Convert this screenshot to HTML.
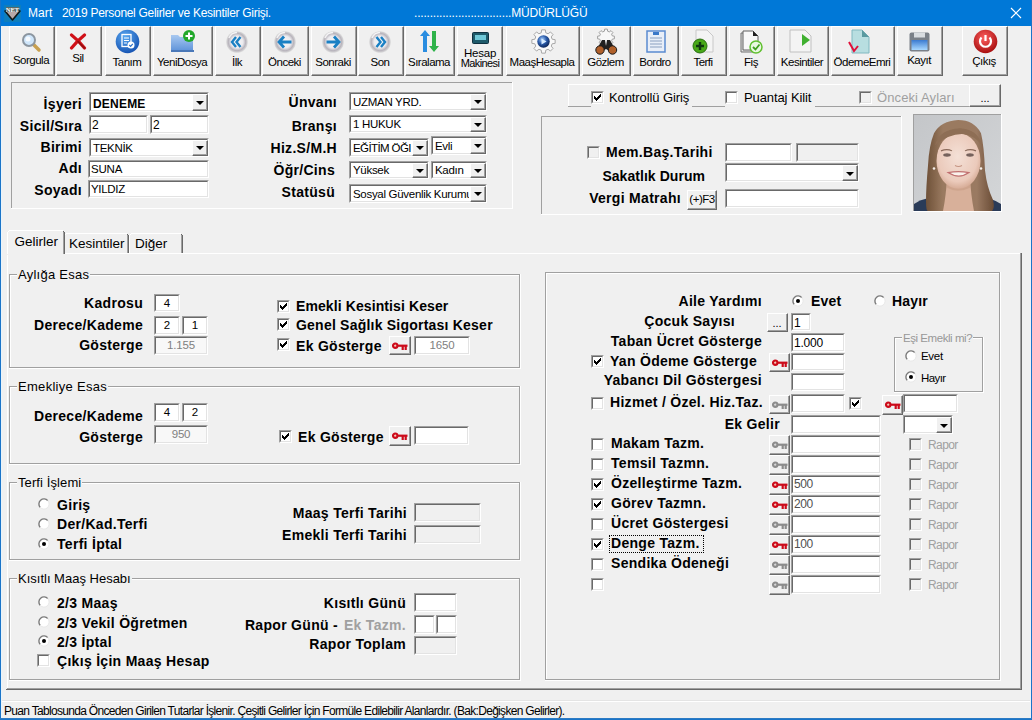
<!DOCTYPE html><html><head><meta charset="utf-8"><style>
html,body{margin:0;padding:0;width:1032px;height:720px;overflow:hidden;background:#f0f0f0;}
body{position:relative;font-family:"Liberation Sans", sans-serif;}
div,svg{position:absolute;box-sizing:border-box;}
</style></head><body>
<div style="left:0px;top:0px;width:1032px;height:720px;background:#f0f0f0"></div>
<div style="left:0px;top:0px;width:1032px;height:26px;background:#0078d7"></div>
<div style="left:0px;top:0px;width:1px;height:720px;background:#1a74c8"></div>
<div style="left:1031px;top:0px;width:1px;height:720px;background:#1a74c8"></div>
<div style="left:1px;top:26px;width:1px;height:692px;background:#e8f4fc"></div>
<div style="left:1030px;top:26px;width:1px;height:692px;background:#eaf2fa"></div>
<div style="left:0px;top:718px;width:1032px;height:1px;background:#2d7bc4"></div>
<div style="left:0px;top:719px;width:1032px;height:1px;background:#1a74c8"></div>
<svg style="left:4px;top:5px" width="17" height="17"><rect x="0" y="0" width="17" height="17" fill="#2a8a8a" opacity="0.35"/><path d="M1 6 L16 6 L8.5 15 Z" fill="#b8a8a8" stroke="#101818" stroke-width="1.6" stroke-linejoin="round"/><rect x="2" y="2" width="13" height="5" fill="#5a6a6a"/><text x="8.5" y="7" font-size="6.5" font-weight="bold" fill="#fff" text-anchor="middle" font-family="Liberation Serif">NET</text></svg>
<div style="left:28px;top:6.84px;font-size:12px;font-weight:normal;color:#fff;letter-spacing:0.1px;line-height:12px;white-space:pre;">Mart</div>
<div style="left:62px;top:6.84px;font-size:12px;font-weight:normal;color:#fff;letter-spacing:-0.3px;line-height:12px;white-space:pre;">2019 Personel Gelirler ve Kesintiler Girişi.</div>
<div style="left:414px;top:6.84px;font-size:12px;font-weight:normal;color:#fff;letter-spacing:-0.2px;line-height:12px;white-space:pre;">...............................MÜDÜRLÜĞÜ</div>
<svg style="left:1010px;top:7px" width="12" height="12"><path d="M1 1 L11 11 M11 1 L1 11" stroke="#fff" stroke-width="1.2"/></svg>
<div style="left:9px;top:26px;width:46px;height:50px;background:#f0f0f0;border-top:1px solid #ffffff;border-left:1px solid #ffffff;border-bottom:1px solid #696969;border-right:1px solid #696969;box-sizing:border-box"><div style="left:0;top:0;right:0;bottom:0;border-bottom:1px solid #a0a0a0;border-right:1px solid #a0a0a0"></div></div>
<svg style="left:20px;top:32px" width="24" height="22"><line x1="13" y1="12" x2="19" y2="18" stroke="#c8a050" stroke-width="3.5" stroke-linecap="round"/><circle cx="9" cy="8" r="6" fill="#cfe6fb" stroke="#8c96a0" stroke-width="2"/><circle cx="8" cy="7" r="2.5" fill="#ffffff" opacity="0.8"/></svg>
<div style="left:-169.0px;top:55.27px;width:400px;text-align:center;font-size:11.5px;font-weight:normal;color:#000;letter-spacing:-0.5px;line-height:11.5px;white-space:pre;">Sorgula</div>
<div style="left:56px;top:26px;width:46px;height:50px;background:#f0f0f0;border-top:1px solid #ffffff;border-left:1px solid #ffffff;border-bottom:1px solid #696969;border-right:1px solid #696969;box-sizing:border-box"><div style="left:0;top:0;right:0;bottom:0;border-bottom:1px solid #a0a0a0;border-right:1px solid #a0a0a0"></div></div>
<svg style="left:69px;top:33px" width="18" height="17"><path d="M2.5 2 Q9 7 15.5 15 M15.5 2 Q8 8 2.5 15" stroke="#d01018" stroke-width="3.2" stroke-linecap="round" fill="none"/><path d="M9 8.5 L15.5 15" stroke="#901010" stroke-width="1.5" stroke-linecap="round"/></svg>
<div style="left:-122.0px;top:53.27px;width:400px;text-align:center;font-size:11.5px;font-weight:normal;color:#000;letter-spacing:-0.5px;line-height:11.5px;white-space:pre;">Sil</div>
<div style="left:105px;top:26px;width:46px;height:50px;background:#f0f0f0;border-top:1px solid #ffffff;border-left:1px solid #ffffff;border-bottom:1px solid #696969;border-right:1px solid #696969;box-sizing:border-box"><div style="left:0;top:0;right:0;bottom:0;border-bottom:1px solid #a0a0a0;border-right:1px solid #a0a0a0"></div></div>
<svg style="left:115px;top:29px" width="25" height="25"><defs><radialGradient id="tg" cx="40%" cy="30%" r="75%"><stop offset="0" stop-color="#5aa8f0"/><stop offset="1" stop-color="#1450b0"/></radialGradient></defs><circle cx="12.5" cy="12.5" r="11.8" fill="url(#tg)"/><rect x="7" y="5.5" width="9" height="12" fill="none" stroke="#fff" stroke-width="1.3"/><path d="M9 9 H14 M9 11.5 H14 M9 14 H12" stroke="#fff" stroke-width="1"/><circle cx="16" cy="16" r="3.5" fill="#fff"/><path d="M14.3 16 L15.6 17.3 L17.8 14.8" stroke="#2a70c8" stroke-width="1.2" fill="none"/></svg>
<div style="left:-73.0px;top:57.27px;width:400px;text-align:center;font-size:11.5px;font-weight:normal;color:#000;letter-spacing:-0.5px;line-height:11.5px;white-space:pre;">Tanım</div>
<div style="left:153px;top:26px;width:60px;height:50px;background:#f0f0f0;border-top:1px solid #ffffff;border-left:1px solid #ffffff;border-bottom:1px solid #696969;border-right:1px solid #696969;box-sizing:border-box"><div style="left:0;top:0;right:0;bottom:0;border-bottom:1px solid #a0a0a0;border-right:1px solid #a0a0a0"></div></div>
<svg style="left:170px;top:29px" width="28" height="25"><defs><linearGradient id="fg" x1="0" y1="0" x2="0" y2="1"><stop offset="0" stop-color="#a8c8f0"/><stop offset="1" stop-color="#5a90d8"/></linearGradient></defs><path d="M1 6 H8 L10 8 H23 V23 H1 Z" fill="url(#fg)"/><rect x="1" y="21" width="23" height="2" fill="#4a78b8"/><circle cx="19" cy="7" r="6" fill="#22a82a"/><path d="M19 3.5 V10.5 M15.5 7 H22.5" stroke="#fff" stroke-width="2"/></svg>
<div style="left:-18.0px;top:57.27px;width:400px;text-align:center;font-size:11.5px;font-weight:normal;color:#000;letter-spacing:-0.5px;line-height:11.5px;white-space:pre;">YeniDosya</div>
<div style="left:215px;top:26px;width:46px;height:50px;background:#f0f0f0;border-top:1px solid #ffffff;border-left:1px solid #ffffff;border-bottom:1px solid #696969;border-right:1px solid #696969;box-sizing:border-box"><div style="left:0;top:0;right:0;bottom:0;border-bottom:1px solid #a0a0a0;border-right:1px solid #a0a0a0"></div></div>
<svg style="left:225px;top:30px" width="24" height="24"><defs><radialGradient id="sg" cx="50%" cy="50%" r="50%"><stop offset="0" stop-color="#f8f8f8"/><stop offset="0.55" stop-color="#ecebef"/><stop offset="0.8" stop-color="#b8b4bc"/><stop offset="1" stop-color="#dcdcdc"/></radialGradient></defs><circle cx="12" cy="12" r="10.8" fill="url(#sg)"/><path d="M4 8 A9 9 0 0 1 12 2.5" stroke="#ffffff" stroke-width="1.5" fill="none" opacity="0.8"/><path d="M11 7 L7 12 L11 17 M15.5 7 L11.5 12 L15.5 17" stroke="#1a80c4" stroke-width="2.4" fill="none"/></svg>
<div style="left:37.0px;top:57.27px;width:400px;text-align:center;font-size:11.5px;font-weight:normal;color:#000;letter-spacing:-0.5px;line-height:11.5px;white-space:pre;">İlk</div>
<div style="left:262px;top:26px;width:47px;height:50px;background:#f0f0f0;border-top:1px solid #ffffff;border-left:1px solid #ffffff;border-bottom:1px solid #696969;border-right:1px solid #696969;box-sizing:border-box"><div style="left:0;top:0;right:0;bottom:0;border-bottom:1px solid #a0a0a0;border-right:1px solid #a0a0a0"></div></div>
<svg style="left:273px;top:30px" width="24" height="24"><defs><radialGradient id="sg" cx="50%" cy="50%" r="50%"><stop offset="0" stop-color="#f8f8f8"/><stop offset="0.55" stop-color="#ecebef"/><stop offset="0.8" stop-color="#b8b4bc"/><stop offset="1" stop-color="#dcdcdc"/></radialGradient></defs><circle cx="12" cy="12" r="10.8" fill="url(#sg)"/><path d="M4 8 A9 9 0 0 1 12 2.5" stroke="#ffffff" stroke-width="1.5" fill="none" opacity="0.8"/><path d="M11 6.5 L6 12 L11 17.5 M7 12 H18.5" stroke="#1a80c4" stroke-width="2.8" fill="none"/></svg>
<div style="left:84.5px;top:57.27px;width:400px;text-align:center;font-size:11.5px;font-weight:normal;color:#000;letter-spacing:-0.5px;line-height:11.5px;white-space:pre;">Önceki</div>
<div style="left:311px;top:26px;width:46px;height:50px;background:#f0f0f0;border-top:1px solid #ffffff;border-left:1px solid #ffffff;border-bottom:1px solid #696969;border-right:1px solid #696969;box-sizing:border-box"><div style="left:0;top:0;right:0;bottom:0;border-bottom:1px solid #a0a0a0;border-right:1px solid #a0a0a0"></div></div>
<svg style="left:321px;top:30px" width="24" height="24"><defs><radialGradient id="sg" cx="50%" cy="50%" r="50%"><stop offset="0" stop-color="#f8f8f8"/><stop offset="0.55" stop-color="#ecebef"/><stop offset="0.8" stop-color="#b8b4bc"/><stop offset="1" stop-color="#dcdcdc"/></radialGradient></defs><circle cx="12" cy="12" r="10.8" fill="url(#sg)"/><path d="M4 8 A9 9 0 0 1 12 2.5" stroke="#ffffff" stroke-width="1.5" fill="none" opacity="0.8"/><path d="M13 6.5 L18 12 L13 17.5 M5.5 12 H17" stroke="#1a80c4" stroke-width="2.8" fill="none"/></svg>
<div style="left:133.0px;top:57.27px;width:400px;text-align:center;font-size:11.5px;font-weight:normal;color:#000;letter-spacing:-0.5px;line-height:11.5px;white-space:pre;">Sonraki</div>
<div style="left:358px;top:26px;width:46px;height:50px;background:#f0f0f0;border-top:1px solid #ffffff;border-left:1px solid #ffffff;border-bottom:1px solid #696969;border-right:1px solid #696969;box-sizing:border-box"><div style="left:0;top:0;right:0;bottom:0;border-bottom:1px solid #a0a0a0;border-right:1px solid #a0a0a0"></div></div>
<svg style="left:368px;top:30px" width="24" height="24"><defs><radialGradient id="sg" cx="50%" cy="50%" r="50%"><stop offset="0" stop-color="#f8f8f8"/><stop offset="0.55" stop-color="#ecebef"/><stop offset="0.8" stop-color="#b8b4bc"/><stop offset="1" stop-color="#dcdcdc"/></radialGradient></defs><circle cx="12" cy="12" r="10.8" fill="url(#sg)"/><path d="M4 8 A9 9 0 0 1 12 2.5" stroke="#ffffff" stroke-width="1.5" fill="none" opacity="0.8"/><path d="M8.5 7 L12.5 12 L8.5 17 M13 7 L17 12 L13 17" stroke="#1a80c4" stroke-width="2.4" fill="none"/></svg>
<div style="left:180.0px;top:57.27px;width:400px;text-align:center;font-size:11.5px;font-weight:normal;color:#000;letter-spacing:-0.5px;line-height:11.5px;white-space:pre;">Son</div>
<div style="left:405px;top:26px;width:50px;height:50px;background:#f0f0f0;border-top:1px solid #ffffff;border-left:1px solid #ffffff;border-bottom:1px solid #696969;border-right:1px solid #696969;box-sizing:border-box"><div style="left:0;top:0;right:0;bottom:0;border-bottom:1px solid #a0a0a0;border-right:1px solid #a0a0a0"></div></div>
<svg style="left:420px;top:29px" width="20" height="24"><path d="M5 1 L10 7 H7 V23 H3 V7 H0 Z" fill="#2a8de0"/><path d="M14 23 L19 17 H16 V2 H12 V17 H9 Z" fill="#2fb34a"/></svg>
<div style="left:229.0px;top:57.27px;width:400px;text-align:center;font-size:11.5px;font-weight:normal;color:#000;letter-spacing:-0.5px;line-height:11.5px;white-space:pre;">Sıralama</div>
<div style="left:457px;top:26px;width:46px;height:50px;background:#f0f0f0;border-top:1px solid #ffffff;border-left:1px solid #ffffff;border-bottom:1px solid #696969;border-right:1px solid #696969;box-sizing:border-box"><div style="left:0;top:0;right:0;bottom:0;border-bottom:1px solid #a0a0a0;border-right:1px solid #a0a0a0"></div></div>
<svg style="left:472px;top:32px" width="17" height="12"><rect x="0.5" y="0.5" width="16" height="11" rx="1" fill="#1e5a6a" stroke="#0e3040"/><rect x="3" y="3" width="11" height="5" fill="#6fc8d8"/></svg>
<div style="left:280.0px;top:48.27px;width:400px;text-align:center;font-size:11.5px;font-weight:normal;color:#000;letter-spacing:-0.2px;line-height:11.5px;white-space:pre;">Hesap</div>
<div style="left:280.0px;top:57.69px;width:400px;text-align:center;font-size:11px;font-weight:normal;color:#000;letter-spacing:-0.6px;line-height:11px;white-space:pre;">Makinesi</div>
<div style="left:506px;top:26px;width:74px;height:50px;background:#f0f0f0;border-top:1px solid #ffffff;border-left:1px solid #ffffff;border-bottom:1px solid #696969;border-right:1px solid #696969;box-sizing:border-box"><div style="left:0;top:0;right:0;bottom:0;border-bottom:1px solid #a0a0a0;border-right:1px solid #a0a0a0"></div></div>
<svg style="left:531px;top:29px" width="25" height="25"><defs><radialGradient id="mg" cx="40%" cy="35%" r="70%"><stop offset="0" stop-color="#a8d0ff"/><stop offset="0.5" stop-color="#2a5aa8"/><stop offset="1" stop-color="#0a2050"/></radialGradient></defs><path d="M21.22 10.26 L24.15 10.65 L24.15 14.35 L21.22 14.74 L20.25 17.08 L22.05 19.44 L19.44 22.05 L17.08 20.25 L14.74 21.22 L14.35 24.15 L10.65 24.15 L10.26 21.22 L7.92 20.25 L5.56 22.05 L2.95 19.44 L4.75 17.08 L3.78 14.74 L0.85 14.35 L0.85 10.65 L3.78 10.26 L4.75 7.92 L2.95 5.56 L5.56 2.95 L7.92 4.75 L10.26 3.78 L10.65 0.85 L14.35 0.85 L14.74 3.78 L17.08 4.75 L19.44 2.95 L22.05 5.56 L20.25 7.92 Z" fill="#f8f8f8" stroke="#a8a8a8" stroke-width="1"/><circle cx="12.5" cy="12.5" r="6.2" fill="url(#mg)"/><path d="M10.5 9.5 L15.5 12.5 L10.5 15.5 Z" fill="#d8ecff"/></svg>
<div style="left:342.0px;top:57.27px;width:400px;text-align:center;font-size:11.5px;font-weight:normal;color:#000;letter-spacing:-0.5px;line-height:11.5px;white-space:pre;">MaaşHesapla</div>
<div style="left:582px;top:26px;width:49px;height:50px;background:#f0f0f0;border-top:1px solid #ffffff;border-left:1px solid #ffffff;border-bottom:1px solid #696969;border-right:1px solid #696969;box-sizing:border-box"><div style="left:0;top:0;right:0;bottom:0;border-bottom:1px solid #a0a0a0;border-right:1px solid #a0a0a0"></div></div>
<svg style="left:593px;top:28px" width="27" height="27"><path d="M19.30 7.88 L21.40 8.17 L21.40 10.83 L19.30 11.12 L18.59 12.81 L19.88 14.50 L18.00 16.38 L16.31 15.09 L14.62 15.80 L14.33 17.90 L11.67 17.90 L11.38 15.80 L9.69 15.09 L8.00 16.38 L6.12 14.50 L7.41 12.81 L6.70 11.12 L4.60 10.83 L4.60 8.17 L6.70 7.88 L7.41 6.19 L6.12 4.50 L8.00 2.62 L9.69 3.91 L11.38 3.20 L11.67 1.10 L14.33 1.10 L14.62 3.20 L16.31 3.91 L18.00 2.62 L19.88 4.50 L18.59 6.19 Z" fill="#f8f8f8" stroke="#a0a0a0" stroke-width="1"/><path d="M9 12 L12 12 L13 18 L14 12 L17 12 L22 21 L18 24 L13 21 L8 24 L4 21 Z" fill="#202020"/><circle cx="7" cy="22" r="4.2" fill="#b0602a" stroke="#1a1a1a" stroke-width="1"/><circle cx="19.5" cy="22" r="4.2" fill="#b0602a" stroke="#1a1a1a" stroke-width="1"/></svg>
<div style="left:405.5px;top:57.27px;width:400px;text-align:center;font-size:11.5px;font-weight:normal;color:#000;letter-spacing:-0.5px;line-height:11.5px;white-space:pre;">Gözlem</div>
<div style="left:633px;top:26px;width:46px;height:50px;background:#f0f0f0;border-top:1px solid #ffffff;border-left:1px solid #ffffff;border-bottom:1px solid #696969;border-right:1px solid #696969;box-sizing:border-box"><div style="left:0;top:0;right:0;bottom:0;border-bottom:1px solid #a0a0a0;border-right:1px solid #a0a0a0"></div></div>
<svg style="left:644px;top:29px" width="24" height="24"><rect x="3" y="2" width="18" height="21" fill="#e8eef8" stroke="#5a8ad0" stroke-width="1.5"/><rect x="9" y="3" width="6" height="3" fill="#3a78c8"/><path d="M6 9 H18 M6 12 H18 M6 15 H18 M6 18 H18" stroke="#8aa0c0" stroke-width="1.2"/></svg>
<div style="left:455.0px;top:57.27px;width:400px;text-align:center;font-size:11.5px;font-weight:normal;color:#000;letter-spacing:-0.5px;line-height:11.5px;white-space:pre;">Bordro</div>
<div style="left:681px;top:26px;width:46px;height:50px;background:#f0f0f0;border-top:1px solid #ffffff;border-left:1px solid #ffffff;border-bottom:1px solid #696969;border-right:1px solid #696969;box-sizing:border-box"><div style="left:0;top:0;right:0;bottom:0;border-bottom:1px solid #a0a0a0;border-right:1px solid #a0a0a0"></div></div>
<svg style="left:692px;top:29px" width="24" height="25"><path d="M4 1 H15 L21 7 V23 H4 Z" fill="#f4f4f4" stroke="#c8c8c8"/><circle cx="8" cy="17" r="7" fill="#48a818" stroke="#2a7010"/><path d="M8 13 V21 M4 17 H12" stroke="#103810" stroke-width="2.4"/></svg>
<div style="left:503.0px;top:57.27px;width:400px;text-align:center;font-size:11.5px;font-weight:normal;color:#000;letter-spacing:-0.5px;line-height:11.5px;white-space:pre;">Terfi</div>
<div style="left:729px;top:26px;width:46px;height:50px;background:#f0f0f0;border-top:1px solid #ffffff;border-left:1px solid #ffffff;border-bottom:1px solid #696969;border-right:1px solid #696969;box-sizing:border-box"><div style="left:0;top:0;right:0;bottom:0;border-bottom:1px solid #a0a0a0;border-right:1px solid #a0a0a0"></div></div>
<svg style="left:739px;top:29px" width="25" height="25"><path d="M2 4 H12 L17 9 V23 H2 Z" fill="#e0e0e0" stroke="#707070"/><path d="M4 2 H14 L19 7 V21 H4 Z" fill="#f8f8f8" stroke="#606060"/><path d="M14 2 L19 7 H14 Z" fill="#202020"/><circle cx="17" cy="18" r="6" fill="#e8f8e0" stroke="#60c030" stroke-width="1.5"/><path d="M14 18 L16.5 20.5 L20.5 15.5" stroke="#40a020" stroke-width="1.8" fill="none"/></svg>
<div style="left:551.0px;top:57.27px;width:400px;text-align:center;font-size:11.5px;font-weight:normal;color:#000;letter-spacing:-0.5px;line-height:11.5px;white-space:pre;">Fiş</div>
<div style="left:777px;top:26px;width:52px;height:50px;background:#f0f0f0;border-top:1px solid #ffffff;border-left:1px solid #ffffff;border-bottom:1px solid #696969;border-right:1px solid #696969;box-sizing:border-box"><div style="left:0;top:0;right:0;bottom:0;border-bottom:1px solid #a0a0a0;border-right:1px solid #a0a0a0"></div></div>
<svg style="left:789px;top:29px" width="24" height="25"><path d="M1 1 H16 L22 7 V23 H1 Z" fill="#f4f4f4" stroke="#c0c0c0"/><path d="M13 5 L21 11 L13 17 Z" fill="#40b030"/></svg>
<div style="left:602.0px;top:57.27px;width:400px;text-align:center;font-size:11.5px;font-weight:normal;color:#000;letter-spacing:-0.5px;line-height:11.5px;white-space:pre;">Kesintiler</div>
<div style="left:831px;top:26px;width:64px;height:50px;background:#f0f0f0;border-top:1px solid #ffffff;border-left:1px solid #ffffff;border-bottom:1px solid #696969;border-right:1px solid #696969;box-sizing:border-box"><div style="left:0;top:0;right:0;bottom:0;border-bottom:1px solid #a0a0a0;border-right:1px solid #a0a0a0"></div></div>
<svg style="left:848px;top:29px" width="26" height="26"><path d="M4 1 H14 L21 8 V24 H4 Z" fill="#b8dee0" stroke="#80b8c0"/><path d="M14 1 L21 8 H14 Z" fill="#5a9aa0"/><path d="M1 13 L6 22 L10 17" stroke="#e0103a" stroke-width="2" fill="none"/></svg>
<div style="left:662.0px;top:57.27px;width:400px;text-align:center;font-size:11.5px;font-weight:normal;color:#000;letter-spacing:-0.5px;line-height:11.5px;white-space:pre;">ÖdemeEmri</div>
<div style="left:897px;top:26px;width:46px;height:50px;background:#f0f0f0;border-top:1px solid #ffffff;border-left:1px solid #ffffff;border-bottom:1px solid #696969;border-right:1px solid #696969;box-sizing:border-box"><div style="left:0;top:0;right:0;bottom:0;border-bottom:1px solid #a0a0a0;border-right:1px solid #a0a0a0"></div></div>
<svg style="left:909px;top:32px" width="21" height="20"><rect x="0.5" y="0.5" width="20" height="19" rx="2" fill="#7a8088"/><rect x="5" y="0.5" width="11" height="5" fill="#d8dce0"/><defs><linearGradient id="kg" x1="0" y1="0" x2="0" y2="1"><stop offset="0" stop-color="#3a7ad0"/><stop offset="1" stop-color="#a8d8ff"/></linearGradient></defs><rect x="2.5" y="8" width="16" height="10" fill="url(#kg)"/></svg>
<div style="left:719.0px;top:55.27px;width:400px;text-align:center;font-size:11.5px;font-weight:normal;color:#000;letter-spacing:-0.5px;line-height:11.5px;white-space:pre;">Kayıt</div>
<div style="left:962px;top:26px;width:46px;height:50px;background:#f0f0f0;border-top:1px solid #ffffff;border-left:1px solid #ffffff;border-bottom:1px solid #696969;border-right:1px solid #696969;box-sizing:border-box"><div style="left:0;top:0;right:0;bottom:0;border-bottom:1px solid #a0a0a0;border-right:1px solid #a0a0a0"></div></div>
<svg style="left:973px;top:29px" width="25" height="25"><defs><radialGradient id="cg" cx="45%" cy="35%" r="70%"><stop offset="0" stop-color="#ff6060"/><stop offset="1" stop-color="#a00808"/></radialGradient></defs><circle cx="12.5" cy="12.5" r="11.8" fill="url(#cg)"/><path d="M8.5 8.5 A5.5 5.5 0 1 0 16.5 8.5" stroke="#fff" stroke-width="2.2" fill="none"/><path d="M12.5 6 V12" stroke="#fff" stroke-width="2.2"/></svg>
<div style="left:784.0px;top:56.27px;width:400px;text-align:center;font-size:11.5px;font-weight:normal;color:#000;letter-spacing:-0.5px;line-height:11.5px;white-space:pre;">Çıkış</div>
<div style="left:11px;top:82px;width:502px;height:1px;background:#a0a0a0"></div>
<div style="left:11px;top:82px;width:1px;height:127px;background:#a0a0a0"></div>
<div style="left:11px;top:208px;width:502px;height:1px;background:#ffffff"></div>
<div style="left:512px;top:82px;width:1px;height:127px;background:#ffffff"></div>
<div style="left:-318px;top:97.15px;width:400px;text-align:right;font-size:14px;font-weight:bold;color:#000;letter-spacing:0.3px;line-height:14px;white-space:pre;">İşyeri</div>
<div style="left:-318px;top:119.15px;width:400px;text-align:right;font-size:14px;font-weight:bold;color:#000;letter-spacing:0.3px;line-height:14px;white-space:pre;">Sicil/Sıra</div>
<div style="left:-318px;top:140.15px;width:400px;text-align:right;font-size:14px;font-weight:bold;color:#000;letter-spacing:0.3px;line-height:14px;white-space:pre;">Birimi</div>
<div style="left:-318px;top:161.15px;width:400px;text-align:right;font-size:14px;font-weight:bold;color:#000;letter-spacing:0.3px;line-height:14px;white-space:pre;">Adı</div>
<div style="left:-318px;top:183.15px;width:400px;text-align:right;font-size:14px;font-weight:bold;color:#000;letter-spacing:0.3px;line-height:14px;white-space:pre;">Soyadı</div>
<div style="left:89px;top:92px;width:120px;height:20px;background:#fff;border-top:1px solid #a0a0a0;border-left:1px solid #a0a0a0;border-bottom:1px solid #ffffff;border-right:1px solid #ffffff;box-sizing:border-box"><div style="left:0;top:0;right:0;bottom:0;border-top:1px solid #696969;border-left:1px solid #696969;border-bottom:1px solid #e3e3e3;border-right:1px solid #e3e3e3"></div></div>
<div style="left:91px;top:94px;width:100px;height:16px;overflow:hidden">
<div style="left:2px;top:3.84px;font-size:12px;font-weight:bold;color:#000;letter-spacing:0.2px;line-height:12px;white-space:pre;">DENEME</div>
</div>
<div style="left:192px;top:94px;width:16px;height:17px;background:#f0f0f0;border-top:1px solid #ffffff;border-left:1px solid #ffffff;border-bottom:1px solid #696969;border-right:1px solid #696969;box-sizing:border-box"><div style="left:0;top:0;right:0;bottom:0;border-bottom:1px solid #a0a0a0;border-right:1px solid #a0a0a0"></div></div>
<svg style="left:196px;top:101px" width="8" height="5"><path d="M0 0 L8 0 L4 4 Z" fill="#000"/></svg>
<div style="left:89px;top:115px;width:59px;height:19px;background:#fff;border-top:1px solid #a0a0a0;border-left:1px solid #a0a0a0;border-bottom:1px solid #ffffff;border-right:1px solid #ffffff;box-sizing:border-box"><div style="left:0;top:0;right:0;bottom:0;border-top:1px solid #696969;border-left:1px solid #696969;border-bottom:1px solid #e3e3e3;border-right:1px solid #e3e3e3"></div></div>
<div style="left:92px;top:118.84px;font-size:12px;font-weight:normal;color:#000;letter-spacing:0px;line-height:12px;white-space:pre;">2</div>
<div style="left:150px;top:115px;width:59px;height:19px;background:#fff;border-top:1px solid #a0a0a0;border-left:1px solid #a0a0a0;border-bottom:1px solid #ffffff;border-right:1px solid #ffffff;box-sizing:border-box"><div style="left:0;top:0;right:0;bottom:0;border-top:1px solid #696969;border-left:1px solid #696969;border-bottom:1px solid #e3e3e3;border-right:1px solid #e3e3e3"></div></div>
<div style="left:153px;top:118.84px;font-size:12px;font-weight:normal;color:#000;letter-spacing:0px;line-height:12px;white-space:pre;">2</div>
<div style="left:89px;top:138px;width:120px;height:19px;background:#fff;border-top:1px solid #a0a0a0;border-left:1px solid #a0a0a0;border-bottom:1px solid #ffffff;border-right:1px solid #ffffff;box-sizing:border-box"><div style="left:0;top:0;right:0;bottom:0;border-top:1px solid #696969;border-left:1px solid #696969;border-bottom:1px solid #e3e3e3;border-right:1px solid #e3e3e3"></div></div>
<div style="left:91px;top:140px;width:100px;height:15px;overflow:hidden">
<div style="left:2px;top:3.27px;font-size:11.5px;font-weight:normal;color:#000;letter-spacing:-0.3px;line-height:11.5px;white-space:pre;">TEKNİK</div>
</div>
<div style="left:192px;top:140px;width:16px;height:16px;background:#f0f0f0;border-top:1px solid #ffffff;border-left:1px solid #ffffff;border-bottom:1px solid #696969;border-right:1px solid #696969;box-sizing:border-box"><div style="left:0;top:0;right:0;bottom:0;border-bottom:1px solid #a0a0a0;border-right:1px solid #a0a0a0"></div></div>
<svg style="left:196px;top:146px" width="8" height="5"><path d="M0 0 L8 0 L4 4 Z" fill="#000"/></svg>
<div style="left:88px;top:160px;width:121px;height:18px;background:#fff;border-top:1px solid #a0a0a0;border-left:1px solid #a0a0a0;border-bottom:1px solid #ffffff;border-right:1px solid #ffffff;box-sizing:border-box"><div style="left:0;top:0;right:0;bottom:0;border-top:1px solid #696969;border-left:1px solid #696969;border-bottom:1px solid #e3e3e3;border-right:1px solid #e3e3e3"></div></div>
<div style="left:91px;top:164.27px;font-size:11.5px;font-weight:normal;color:#000;letter-spacing:-0.2px;line-height:11.5px;white-space:pre;">SUNA</div>
<div style="left:88px;top:180px;width:121px;height:18px;background:#fff;border-top:1px solid #a0a0a0;border-left:1px solid #a0a0a0;border-bottom:1px solid #ffffff;border-right:1px solid #ffffff;box-sizing:border-box"><div style="left:0;top:0;right:0;bottom:0;border-top:1px solid #696969;border-left:1px solid #696969;border-bottom:1px solid #e3e3e3;border-right:1px solid #e3e3e3"></div></div>
<div style="left:91px;top:184.27px;font-size:11.5px;font-weight:normal;color:#000;letter-spacing:-0.3px;line-height:11.5px;white-space:pre;">YILDIZ</div>
<div style="left:-63px;top:95.15px;width:400px;text-align:right;font-size:14px;font-weight:bold;color:#000;letter-spacing:0.3px;line-height:14px;white-space:pre;">Ünvanı</div>
<div style="left:-63px;top:119.15px;width:400px;text-align:right;font-size:14px;font-weight:bold;color:#000;letter-spacing:0.3px;line-height:14px;white-space:pre;">Branşı</div>
<div style="left:-63px;top:141.15px;width:400px;text-align:right;font-size:14px;font-weight:bold;color:#000;letter-spacing:0.3px;line-height:14px;white-space:pre;">Hiz.S/M.H</div>
<div style="left:-65px;top:163.15px;width:400px;text-align:right;font-size:14px;font-weight:bold;color:#000;letter-spacing:0.3px;line-height:14px;white-space:pre;">Öğr/Cins</div>
<div style="left:-65px;top:185.15px;width:400px;text-align:right;font-size:14px;font-weight:bold;color:#000;letter-spacing:0.3px;line-height:14px;white-space:pre;">Statüsü</div>
<div style="left:349px;top:92px;width:138px;height:19px;background:#fff;border-top:1px solid #a0a0a0;border-left:1px solid #a0a0a0;border-bottom:1px solid #ffffff;border-right:1px solid #ffffff;box-sizing:border-box"><div style="left:0;top:0;right:0;bottom:0;border-top:1px solid #696969;border-left:1px solid #696969;border-bottom:1px solid #e3e3e3;border-right:1px solid #e3e3e3"></div></div>
<div style="left:351px;top:94px;width:118px;height:15px;overflow:hidden">
<div style="left:2px;top:3.27px;font-size:11.5px;font-weight:normal;color:#000;letter-spacing:-0.3px;line-height:11.5px;white-space:pre;">UZMAN YRD.</div>
</div>
<div style="left:470px;top:94px;width:16px;height:16px;background:#f0f0f0;border-top:1px solid #ffffff;border-left:1px solid #ffffff;border-bottom:1px solid #696969;border-right:1px solid #696969;box-sizing:border-box"><div style="left:0;top:0;right:0;bottom:0;border-bottom:1px solid #a0a0a0;border-right:1px solid #a0a0a0"></div></div>
<svg style="left:474px;top:100px" width="8" height="5"><path d="M0 0 L8 0 L4 4 Z" fill="#000"/></svg>
<div style="left:349px;top:115px;width:138px;height:18px;background:#fff;border-top:1px solid #a0a0a0;border-left:1px solid #a0a0a0;border-bottom:1px solid #ffffff;border-right:1px solid #ffffff;box-sizing:border-box"><div style="left:0;top:0;right:0;bottom:0;border-top:1px solid #696969;border-left:1px solid #696969;border-bottom:1px solid #e3e3e3;border-right:1px solid #e3e3e3"></div></div>
<div style="left:351px;top:117px;width:118px;height:14px;overflow:hidden">
<div style="left:2px;top:2.27px;font-size:11.5px;font-weight:normal;color:#000;letter-spacing:-0.3px;line-height:11.5px;white-space:pre;">1 HUKUK</div>
</div>
<div style="left:470px;top:117px;width:16px;height:15px;background:#f0f0f0;border-top:1px solid #ffffff;border-left:1px solid #ffffff;border-bottom:1px solid #696969;border-right:1px solid #696969;box-sizing:border-box"><div style="left:0;top:0;right:0;bottom:0;border-bottom:1px solid #a0a0a0;border-right:1px solid #a0a0a0"></div></div>
<svg style="left:474px;top:123px" width="8" height="5"><path d="M0 0 L8 0 L4 4 Z" fill="#000"/></svg>
<div style="left:349px;top:138px;width:80px;height:19px;background:#fff;border-top:1px solid #a0a0a0;border-left:1px solid #a0a0a0;border-bottom:1px solid #ffffff;border-right:1px solid #ffffff;box-sizing:border-box"><div style="left:0;top:0;right:0;bottom:0;border-top:1px solid #696969;border-left:1px solid #696969;border-bottom:1px solid #e3e3e3;border-right:1px solid #e3e3e3"></div></div>
<div style="left:351px;top:140px;width:60px;height:15px;overflow:hidden">
<div style="left:2px;top:3.27px;font-size:11.5px;font-weight:normal;color:#000;letter-spacing:-0.6px;line-height:11.5px;white-space:pre;">EĞİTİM ÖĞI</div>
</div>
<div style="left:412px;top:140px;width:16px;height:16px;background:#f0f0f0;border-top:1px solid #ffffff;border-left:1px solid #ffffff;border-bottom:1px solid #696969;border-right:1px solid #696969;box-sizing:border-box"><div style="left:0;top:0;right:0;bottom:0;border-bottom:1px solid #a0a0a0;border-right:1px solid #a0a0a0"></div></div>
<svg style="left:416px;top:146px" width="8" height="5"><path d="M0 0 L8 0 L4 4 Z" fill="#000"/></svg>
<div style="left:431px;top:136px;width:56px;height:19px;background:#fff;border-top:1px solid #a0a0a0;border-left:1px solid #a0a0a0;border-bottom:1px solid #ffffff;border-right:1px solid #ffffff;box-sizing:border-box"><div style="left:0;top:0;right:0;bottom:0;border-top:1px solid #696969;border-left:1px solid #696969;border-bottom:1px solid #e3e3e3;border-right:1px solid #e3e3e3"></div></div>
<div style="left:433px;top:138px;width:36px;height:15px;overflow:hidden">
<div style="left:2px;top:3.27px;font-size:11.5px;font-weight:normal;color:#000;letter-spacing:-0.3px;line-height:11.5px;white-space:pre;">Evli</div>
</div>
<div style="left:470px;top:138px;width:16px;height:16px;background:#f0f0f0;border-top:1px solid #ffffff;border-left:1px solid #ffffff;border-bottom:1px solid #696969;border-right:1px solid #696969;box-sizing:border-box"><div style="left:0;top:0;right:0;bottom:0;border-bottom:1px solid #a0a0a0;border-right:1px solid #a0a0a0"></div></div>
<svg style="left:474px;top:144px" width="8" height="5"><path d="M0 0 L8 0 L4 4 Z" fill="#000"/></svg>
<div style="left:349px;top:161px;width:80px;height:18px;background:#fff;border-top:1px solid #a0a0a0;border-left:1px solid #a0a0a0;border-bottom:1px solid #ffffff;border-right:1px solid #ffffff;box-sizing:border-box"><div style="left:0;top:0;right:0;bottom:0;border-top:1px solid #696969;border-left:1px solid #696969;border-bottom:1px solid #e3e3e3;border-right:1px solid #e3e3e3"></div></div>
<div style="left:351px;top:163px;width:60px;height:14px;overflow:hidden">
<div style="left:2px;top:2.27px;font-size:11.5px;font-weight:normal;color:#000;letter-spacing:-0.3px;line-height:11.5px;white-space:pre;">Yüksek</div>
</div>
<div style="left:412px;top:163px;width:16px;height:15px;background:#f0f0f0;border-top:1px solid #ffffff;border-left:1px solid #ffffff;border-bottom:1px solid #696969;border-right:1px solid #696969;box-sizing:border-box"><div style="left:0;top:0;right:0;bottom:0;border-bottom:1px solid #a0a0a0;border-right:1px solid #a0a0a0"></div></div>
<svg style="left:416px;top:169px" width="8" height="5"><path d="M0 0 L8 0 L4 4 Z" fill="#000"/></svg>
<div style="left:431px;top:161px;width:56px;height:18px;background:#fff;border-top:1px solid #a0a0a0;border-left:1px solid #a0a0a0;border-bottom:1px solid #ffffff;border-right:1px solid #ffffff;box-sizing:border-box"><div style="left:0;top:0;right:0;bottom:0;border-top:1px solid #696969;border-left:1px solid #696969;border-bottom:1px solid #e3e3e3;border-right:1px solid #e3e3e3"></div></div>
<div style="left:433px;top:163px;width:36px;height:14px;overflow:hidden">
<div style="left:2px;top:2.27px;font-size:11.5px;font-weight:normal;color:#000;letter-spacing:-0.3px;line-height:11.5px;white-space:pre;">Kadın</div>
</div>
<div style="left:470px;top:163px;width:16px;height:15px;background:#f0f0f0;border-top:1px solid #ffffff;border-left:1px solid #ffffff;border-bottom:1px solid #696969;border-right:1px solid #696969;box-sizing:border-box"><div style="left:0;top:0;right:0;bottom:0;border-bottom:1px solid #a0a0a0;border-right:1px solid #a0a0a0"></div></div>
<svg style="left:474px;top:169px" width="8" height="5"><path d="M0 0 L8 0 L4 4 Z" fill="#000"/></svg>
<div style="left:349px;top:184px;width:138px;height:19px;background:#fff;border-top:1px solid #a0a0a0;border-left:1px solid #a0a0a0;border-bottom:1px solid #ffffff;border-right:1px solid #ffffff;box-sizing:border-box"><div style="left:0;top:0;right:0;bottom:0;border-top:1px solid #696969;border-left:1px solid #696969;border-bottom:1px solid #e3e3e3;border-right:1px solid #e3e3e3"></div></div>
<div style="left:351px;top:186px;width:118px;height:15px;overflow:hidden">
<div style="left:2px;top:3.27px;font-size:11.5px;font-weight:normal;color:#000;letter-spacing:-0.3px;line-height:11.5px;white-space:pre;">Sosyal Güvenlik Kurumu</div>
</div>
<div style="left:470px;top:186px;width:16px;height:16px;background:#f0f0f0;border-top:1px solid #ffffff;border-left:1px solid #ffffff;border-bottom:1px solid #696969;border-right:1px solid #696969;box-sizing:border-box"><div style="left:0;top:0;right:0;bottom:0;border-bottom:1px solid #a0a0a0;border-right:1px solid #a0a0a0"></div></div>
<svg style="left:474px;top:192px" width="8" height="5"><path d="M0 0 L8 0 L4 4 Z" fill="#000"/></svg>
<div style="left:568px;top:84px;width:401px;height:1px;background:#ffffff"></div>
<div style="left:568px;top:84px;width:1px;height:23px;background:#ffffff"></div>
<div style="left:568px;top:106px;width:23px;height:1px;background:#a0a0a0"></div>
<div style="left:692px;top:106px;width:33px;height:1px;background:#a0a0a0"></div>
<div style="left:815px;top:106px;width:154px;height:1px;background:#a0a0a0"></div>
<div style="left:591px;top:91px;width:13px;height:13px;background:#fff;border-top:1px solid #a0a0a0;border-left:1px solid #a0a0a0;border-bottom:1px solid #ffffff;border-right:1px solid #ffffff;box-sizing:border-box"><div style="left:0;top:0;right:0;bottom:0;border-top:1px solid #696969;border-left:1px solid #696969;border-bottom:1px solid #e3e3e3;border-right:1px solid #e3e3e3"></div></div>
<svg style="left:591px;top:91px" width="13" height="13" shape-rendering="crispEdges"><path d="M3 5h1v3h-1zM4 6h1v3h-1zM5 7h1v3h-1zM6 6h1v3h-1zM7 5h1v3h-1zM8 4h1v3h-1zM9 3h1v3h-1z" fill="#000"/></svg>
<div style="left:609px;top:91.00px;font-size:13px;font-weight:normal;color:#000;letter-spacing:-0.1px;line-height:13px;white-space:pre;">Kontrollü Giriş</div>
<div style="left:725px;top:91px;width:13px;height:13px;background:#fff;border-top:1px solid #a0a0a0;border-left:1px solid #a0a0a0;border-bottom:1px solid #ffffff;border-right:1px solid #ffffff;box-sizing:border-box"><div style="left:0;top:0;right:0;bottom:0;border-top:1px solid #696969;border-left:1px solid #696969;border-bottom:1px solid #e3e3e3;border-right:1px solid #e3e3e3"></div></div>
<div style="left:744px;top:91.00px;font-size:13px;font-weight:normal;color:#000;letter-spacing:-0.1px;line-height:13px;white-space:pre;">Puantaj Kilit</div>
<div style="left:859px;top:91px;width:13px;height:13px;background:#f0f0f0;border-top:1px solid #a0a0a0;border-left:1px solid #a0a0a0;border-bottom:1px solid #ffffff;border-right:1px solid #ffffff;box-sizing:border-box"><div style="left:0;top:0;right:0;bottom:0;border-top:1px solid #696969;border-left:1px solid #696969;border-bottom:1px solid #e3e3e3;border-right:1px solid #e3e3e3"></div></div>
<div style="left:877px;top:91.00px;font-size:13px;font-weight:normal;color:#a0a0a0;letter-spacing:0.1px;line-height:13px;white-space:pre;">Önceki Ayları</div>
<div style="left:969px;top:84px;width:32px;height:23px;background:#f0f0f0;border-top:1px solid #ffffff;border-left:1px solid #ffffff;border-bottom:1px solid #696969;border-right:1px solid #696969;box-sizing:border-box"><div style="left:0;top:0;right:0;bottom:0;border-bottom:1px solid #a0a0a0;border-right:1px solid #a0a0a0"></div></div>
<div style="left:785px;top:92.69px;width:400px;text-align:center;font-size:11px;font-weight:normal;color:#000;letter-spacing:0px;line-height:11px;white-space:pre;">...</div>
<div style="left:541px;top:116px;width:361px;height:1px;background:#a0a0a0"></div>
<div style="left:541px;top:116px;width:1px;height:99px;background:#a0a0a0"></div>
<div style="left:541px;top:214px;width:361px;height:1px;background:#ffffff"></div>
<div style="left:901px;top:116px;width:1px;height:99px;background:#ffffff"></div>
<div style="left:587px;top:146px;width:13px;height:13px;background:#f0f0f0;border-top:1px solid #a0a0a0;border-left:1px solid #a0a0a0;border-bottom:1px solid #ffffff;border-right:1px solid #ffffff;box-sizing:border-box"><div style="left:0;top:0;right:0;bottom:0;border-top:1px solid #696969;border-left:1px solid #696969;border-bottom:1px solid #e3e3e3;border-right:1px solid #e3e3e3"></div></div>
<div style="left:606px;top:145.15px;font-size:14px;font-weight:bold;color:#000;letter-spacing:0.3px;line-height:14px;white-space:pre;">Mem.Baş.Tarihi</div>
<div style="left:305px;top:169.15px;width:400px;text-align:right;font-size:14px;font-weight:bold;color:#000;letter-spacing:0.05px;line-height:14px;white-space:pre;">Sakatlık Durum</div>
<div style="left:281px;top:191.15px;width:400px;text-align:right;font-size:14px;font-weight:bold;color:#000;letter-spacing:0.3px;line-height:14px;white-space:pre;">Vergi Matrahı</div>
<div style="left:687px;top:190px;width:30px;height:20px;background:#f0f0f0;border-top:1px solid #ffffff;border-left:1px solid #ffffff;border-bottom:1px solid #696969;border-right:1px solid #696969;box-sizing:border-box"><div style="left:0;top:0;right:0;bottom:0;border-bottom:1px solid #a0a0a0;border-right:1px solid #a0a0a0"></div></div>
<div style="left:502px;top:194.27px;width:400px;text-align:center;font-size:11.5px;font-weight:normal;color:#000;letter-spacing:-0.5px;line-height:11.5px;white-space:pre;">(+)F3</div>
<div style="left:725px;top:143px;width:67px;height:19px;background:#fff;border-top:1px solid #a0a0a0;border-left:1px solid #a0a0a0;border-bottom:1px solid #ffffff;border-right:1px solid #ffffff;box-sizing:border-box"><div style="left:0;top:0;right:0;bottom:0;border-top:1px solid #696969;border-left:1px solid #696969;border-bottom:1px solid #e3e3e3;border-right:1px solid #e3e3e3"></div></div>
<div style="left:796px;top:143px;width:63px;height:19px;background:#f0f0f0;border-top:1px solid #a0a0a0;border-left:1px solid #a0a0a0;border-bottom:1px solid #ffffff;border-right:1px solid #ffffff;box-sizing:border-box"><div style="left:0;top:0;right:0;bottom:0;border-top:1px solid #696969;border-left:1px solid #696969;border-bottom:1px solid #e3e3e3;border-right:1px solid #e3e3e3"></div></div>
<div style="left:725px;top:163px;width:134px;height:19px;background:#fff;border-top:1px solid #a0a0a0;border-left:1px solid #a0a0a0;border-bottom:1px solid #ffffff;border-right:1px solid #ffffff;box-sizing:border-box"><div style="left:0;top:0;right:0;bottom:0;border-top:1px solid #696969;border-left:1px solid #696969;border-bottom:1px solid #e3e3e3;border-right:1px solid #e3e3e3"></div></div>
<div style="left:842px;top:165px;width:16px;height:16px;background:#f0f0f0;border-top:1px solid #ffffff;border-left:1px solid #ffffff;border-bottom:1px solid #696969;border-right:1px solid #696969;box-sizing:border-box"><div style="left:0;top:0;right:0;bottom:0;border-bottom:1px solid #a0a0a0;border-right:1px solid #a0a0a0"></div></div>
<svg style="left:846px;top:172px" width="8" height="5"><path d="M0 0 L8 0 L4 4 Z" fill="#000"/></svg>
<div style="left:725px;top:189px;width:134px;height:19px;background:#fff;border-top:1px solid #a0a0a0;border-left:1px solid #a0a0a0;border-bottom:1px solid #ffffff;border-right:1px solid #ffffff;box-sizing:border-box"><div style="left:0;top:0;right:0;bottom:0;border-top:1px solid #696969;border-left:1px solid #696969;border-bottom:1px solid #e3e3e3;border-right:1px solid #e3e3e3"></div></div>
<div style="left:913px;top:114px;width:89px;height:1px;background:#a0a0a0"></div>
<div style="left:913px;top:114px;width:1px;height:98px;background:#a0a0a0"></div>
<div style="left:913px;top:211px;width:89px;height:1px;background:#ffffff"></div>
<div style="left:1001px;top:114px;width:1px;height:98px;background:#ffffff"></div>
<svg style="left:914px;top:115px" width="87" height="96" viewBox="0 0 87 95" preserveAspectRatio="none">
<defs>
<linearGradient id="pbg" x1="0" y1="0" x2="1" y2="1"><stop offset="0" stop-color="#c4c6c9"/><stop offset="1" stop-color="#d4d6d8"/></linearGradient>
<radialGradient id="skin" cx="48%" cy="42%" r="60%"><stop offset="0" stop-color="#f4e0d6"/><stop offset="0.75" stop-color="#ebcabb"/><stop offset="1" stop-color="#d4a892"/></radialGradient>
<linearGradient id="hair" x1="0" y1="0" x2="1" y2="0"><stop offset="0" stop-color="#6e5038"/><stop offset="0.25" stop-color="#9a7a60"/><stop offset="0.75" stop-color="#9a7a62"/><stop offset="1" stop-color="#6a4c36"/></linearGradient>
<filter id="bl" x="-10%" y="-10%" width="120%" height="120%"><feGaussianBlur stdDeviation="0.75"/></filter>
</defs>
<rect width="87" height="95" fill="url(#pbg)"/>
<g filter="url(#bl)">
<path d="M0 88 Q6 84 12 83 L15 95 L0 95 Z" fill="#2c3a58"/>
<path d="M76 83 Q82 85 87 88 L87 95 L74 95 Z" fill="#2c3a58"/>
<path d="M44 5 Q27 6 20 18 Q15 30 14 50 Q12 72 12 86 Q12 95 14 95 L78 95 Q81 92 79 84 Q73 72 71 55 Q70 30 67 18 Q60 5 44 5 Z" fill="url(#hair)"/>
<path d="M33 62 L56 62 Q57 80 60 95 L29 95 Q32 80 33 62 Z" fill="#d8b09a"/>
<path d="M33 66 Q44 74 56 66 L56 72 Q44 78 33 72 Z" fill="#c89c86" opacity="0.6"/>
<ellipse cx="44.5" cy="45.5" rx="22" ry="27.5" fill="url(#skin)"/>
<path d="M21 30 Q25 14 46 13 Q64 14 68 30 Q60 20 50 19 Q36 18 21 30 Z" fill="#8e6e54"/>
<path d="M27 35.5 Q33 33 38 35.5" stroke="#8a6a5a" stroke-width="1.1" fill="none"/>
<path d="M51 35.5 Q56 33 62 35.5" stroke="#8a6a5a" stroke-width="1.1" fill="none"/>
<ellipse cx="33" cy="39.5" rx="3.8" ry="1.7" fill="#76625c"/>
<ellipse cx="56" cy="39.5" rx="3.8" ry="1.7" fill="#76625c"/>
<path d="M41 50 Q44.5 52 48 50" stroke="#c49482" stroke-width="1" fill="none"/>
<path d="M34 57 Q44.5 55 55 57 Q45 64 34 57 Z" fill="#faf2ec" stroke="#c07070" stroke-width="1.2"/>
<circle cx="20" cy="53" r="1.3" fill="#f4eee8"/>
<circle cx="67" cy="53" r="1.3" fill="#f4eee8"/>
</g>
</svg>
<div style="left:7px;top:253px;width:1px;height:436px;background:#ffffff"></div>
<div style="left:7px;top:253px;width:1014px;height:1px;background:#ffffff"></div>
<div style="left:1020px;top:253px;width:1px;height:436px;background:#a0a0a0"></div>
<div style="left:1021px;top:253px;width:1px;height:437px;background:#696969"></div>
<div style="left:7px;top:688px;width:1014px;height:1px;background:#a0a0a0"></div>
<div style="left:6px;top:689px;width:1016px;height:1px;background:#696969"></div>
<div style="left:64px;top:233px;width:65px;height:20px;background:#f0f0f0"></div>
<div style="left:66px;top:233px;width:61px;height:1px;background:#ffffff"></div>
<div style="left:64px;top:235px;width:1px;height:18px;background:#ffffff"></div>
<div style="left:65px;top:234px;width:1px;height:1px;background:#ffffff"></div>
<div style="left:127px;top:235px;width:1px;height:18px;background:#a0a0a0"></div>
<div style="left:128px;top:235px;width:1px;height:18px;background:#696969"></div>
<div style="left:127px;top:234px;width:1px;height:1px;background:#696969"></div>
<div style="left:69px;top:236.57px;font-size:13.5px;font-weight:normal;color:#000;letter-spacing:0px;line-height:13.5px;white-space:pre;">Kesintiler</div>
<div style="left:129px;top:233px;width:54px;height:20px;background:#f0f0f0"></div>
<div style="left:131px;top:233px;width:50px;height:1px;background:#ffffff"></div>
<div style="left:129px;top:235px;width:1px;height:18px;background:#ffffff"></div>
<div style="left:130px;top:234px;width:1px;height:1px;background:#ffffff"></div>
<div style="left:181px;top:235px;width:1px;height:18px;background:#a0a0a0"></div>
<div style="left:182px;top:235px;width:1px;height:18px;background:#696969"></div>
<div style="left:181px;top:234px;width:1px;height:1px;background:#696969"></div>
<div style="left:135px;top:236.57px;font-size:13.5px;font-weight:normal;color:#000;letter-spacing:0px;line-height:13.5px;white-space:pre;">Diğer</div>
<div style="left:7px;top:231px;width:58px;height:24px;background:#f0f0f0"></div>
<div style="left:9px;top:230px;width:54px;height:1px;background:#ffffff"></div>
<div style="left:7px;top:232px;width:1px;height:22px;background:#ffffff"></div>
<div style="left:8px;top:231px;width:1px;height:1px;background:#ffffff"></div>
<div style="left:63px;top:232px;width:1px;height:22px;background:#a0a0a0"></div>
<div style="left:64px;top:232px;width:1px;height:22px;background:#696969"></div>
<div style="left:63px;top:231px;width:1px;height:1px;background:#696969"></div>
<div style="left:14.5px;top:234.57px;font-size:13.5px;font-weight:normal;color:#000;letter-spacing:0px;line-height:13.5px;white-space:pre;">Gelirler</div>
<div style="left:9px;top:274px;width:511px;height:1px;background:#a0a0a0"></div>
<div style="left:10px;top:275px;width:510px;height:1px;background:#ffffff"></div>
<div style="left:9px;top:274px;width:1px;height:94px;background:#a0a0a0"></div>
<div style="left:10px;top:275px;width:1px;height:92px;background:#ffffff"></div>
<div style="left:9px;top:367px;width:511px;height:1px;background:#a0a0a0"></div>
<div style="left:9px;top:368px;width:512px;height:1px;background:#ffffff"></div>
<div style="left:519px;top:274px;width:1px;height:94px;background:#a0a0a0"></div>
<div style="left:520px;top:274px;width:1px;height:95px;background:#ffffff"></div>
<div style="left:17px;top:272px;height:5px;background:#f0f0f0;padding:0 1px;font-size:13px;letter-spacing:0.25px;color:transparent;white-space:pre;line-height:5px">Aylığa Esas</div>
<div style="left:18px;top:268.00px;font-size:13px;font-weight:normal;color:#000;letter-spacing:0.25px;line-height:13px;white-space:pre;">Aylığa Esas</div>
<div style="left:-257px;top:296.15px;width:400px;text-align:right;font-size:14px;font-weight:bold;color:#000;letter-spacing:0.3px;line-height:14px;white-space:pre;">Kadrosu</div>
<div style="left:-257px;top:318.15px;width:400px;text-align:right;font-size:14px;font-weight:bold;color:#000;letter-spacing:0.3px;line-height:14px;white-space:pre;">Derece/Kademe</div>
<div style="left:-257px;top:338.15px;width:400px;text-align:right;font-size:14px;font-weight:bold;color:#000;letter-spacing:0.3px;line-height:14px;white-space:pre;">Gösterge</div>
<div style="left:154px;top:294px;width:26px;height:18px;background:#fff;border-top:1px solid #a0a0a0;border-left:1px solid #a0a0a0;border-bottom:1px solid #ffffff;border-right:1px solid #ffffff;box-sizing:border-box"><div style="left:0;top:0;right:0;bottom:0;border-top:1px solid #696969;border-left:1px solid #696969;border-bottom:1px solid #e3e3e3;border-right:1px solid #e3e3e3"></div></div>
<div style="left:-33.0px;top:298.27px;width:400px;text-align:center;font-size:11.5px;font-weight:normal;color:#000;letter-spacing:0px;line-height:11.5px;white-space:pre;">4</div>
<div style="left:154px;top:316px;width:26px;height:19px;background:#fff;border-top:1px solid #a0a0a0;border-left:1px solid #a0a0a0;border-bottom:1px solid #ffffff;border-right:1px solid #ffffff;box-sizing:border-box"><div style="left:0;top:0;right:0;bottom:0;border-top:1px solid #696969;border-left:1px solid #696969;border-bottom:1px solid #e3e3e3;border-right:1px solid #e3e3e3"></div></div>
<div style="left:-33.0px;top:320.27px;width:400px;text-align:center;font-size:11.5px;font-weight:normal;color:#000;letter-spacing:0px;line-height:11.5px;white-space:pre;">2</div>
<div style="left:182px;top:316px;width:26px;height:19px;background:#fff;border-top:1px solid #a0a0a0;border-left:1px solid #a0a0a0;border-bottom:1px solid #ffffff;border-right:1px solid #ffffff;box-sizing:border-box"><div style="left:0;top:0;right:0;bottom:0;border-top:1px solid #696969;border-left:1px solid #696969;border-bottom:1px solid #e3e3e3;border-right:1px solid #e3e3e3"></div></div>
<div style="left:-5.0px;top:320.27px;width:400px;text-align:center;font-size:11.5px;font-weight:normal;color:#000;letter-spacing:0px;line-height:11.5px;white-space:pre;">1</div>
<div style="left:154px;top:336px;width:54px;height:19px;background:#f8f8f8;border-top:1px solid #a0a0a0;border-left:1px solid #a0a0a0;border-bottom:1px solid #ffffff;border-right:1px solid #ffffff;box-sizing:border-box"><div style="left:0;top:0;right:0;bottom:0;border-top:1px solid #696969;border-left:1px solid #696969;border-bottom:1px solid #e3e3e3;border-right:1px solid #e3e3e3"></div></div>
<div style="left:-19.0px;top:340.27px;width:400px;text-align:center;font-size:11.5px;font-weight:normal;color:#808080;letter-spacing:-0.2px;line-height:11.5px;white-space:pre;">1.155</div>
<div style="left:277px;top:300px;width:13px;height:13px;background:#fff;border-top:1px solid #a0a0a0;border-left:1px solid #a0a0a0;border-bottom:1px solid #ffffff;border-right:1px solid #ffffff;box-sizing:border-box"><div style="left:0;top:0;right:0;bottom:0;border-top:1px solid #696969;border-left:1px solid #696969;border-bottom:1px solid #e3e3e3;border-right:1px solid #e3e3e3"></div></div>
<svg style="left:277px;top:300px" width="13" height="13" shape-rendering="crispEdges"><path d="M3 5h1v3h-1zM4 6h1v3h-1zM5 7h1v3h-1zM6 6h1v3h-1zM7 5h1v3h-1zM8 4h1v3h-1zM9 3h1v3h-1z" fill="#000"/></svg>
<div style="left:296px;top:299.15px;font-size:14px;font-weight:bold;color:#000;letter-spacing:0.1px;line-height:14px;white-space:pre;">Emekli Kesintisi Keser</div>
<div style="left:277px;top:318px;width:13px;height:13px;background:#fff;border-top:1px solid #a0a0a0;border-left:1px solid #a0a0a0;border-bottom:1px solid #ffffff;border-right:1px solid #ffffff;box-sizing:border-box"><div style="left:0;top:0;right:0;bottom:0;border-top:1px solid #696969;border-left:1px solid #696969;border-bottom:1px solid #e3e3e3;border-right:1px solid #e3e3e3"></div></div>
<svg style="left:277px;top:318px" width="13" height="13" shape-rendering="crispEdges"><path d="M3 5h1v3h-1zM4 6h1v3h-1zM5 7h1v3h-1zM6 6h1v3h-1zM7 5h1v3h-1zM8 4h1v3h-1zM9 3h1v3h-1z" fill="#000"/></svg>
<div style="left:296px;top:318.15px;font-size:14px;font-weight:bold;color:#000;letter-spacing:0.22px;line-height:14px;white-space:pre;">Genel Sağlık Sigortası Keser</div>
<div style="left:277px;top:338px;width:13px;height:13px;background:#fff;border-top:1px solid #a0a0a0;border-left:1px solid #a0a0a0;border-bottom:1px solid #ffffff;border-right:1px solid #ffffff;box-sizing:border-box"><div style="left:0;top:0;right:0;bottom:0;border-top:1px solid #696969;border-left:1px solid #696969;border-bottom:1px solid #e3e3e3;border-right:1px solid #e3e3e3"></div></div>
<svg style="left:277px;top:338px" width="13" height="13" shape-rendering="crispEdges"><path d="M3 5h1v3h-1zM4 6h1v3h-1zM5 7h1v3h-1zM6 6h1v3h-1zM7 5h1v3h-1zM8 4h1v3h-1zM9 3h1v3h-1z" fill="#000"/></svg>
<div style="left:296px;top:339.15px;font-size:14px;font-weight:bold;color:#000;letter-spacing:0.3px;line-height:14px;white-space:pre;">Ek Gösterge</div>
<div style="left:389px;top:336px;width:22px;height:19px;background:#f0f0f0;border-top:1px solid #ffffff;border-left:1px solid #ffffff;border-bottom:1px solid #696969;border-right:1px solid #696969;box-sizing:border-box"><div style="left:0;top:0;right:0;bottom:0;border-bottom:1px solid #a0a0a0;border-right:1px solid #a0a0a0"></div></div>
<svg style="left:392px;top:342px" width="16" height="9"><circle cx="3.2" cy="3.7" r="2.2" stroke="#cc0a1a" stroke-width="2.1" fill="#f4c8b8"/><rect x="5.5" y="2.6" width="10" height="2.2" fill="#cc0a1a"/><rect x="9.6" y="4" width="2.2" height="4" fill="#cc0a1a"/><rect x="12.6" y="4" width="2.2" height="4" fill="#cc0a1a"/></svg>
<div style="left:414px;top:336px;width:56px;height:19px;background:#fff;border-top:1px solid #a0a0a0;border-left:1px solid #a0a0a0;border-bottom:1px solid #ffffff;border-right:1px solid #ffffff;box-sizing:border-box"><div style="left:0;top:0;right:0;bottom:0;border-top:1px solid #696969;border-left:1px solid #696969;border-bottom:1px solid #e3e3e3;border-right:1px solid #e3e3e3"></div></div>
<div style="left:242.0px;top:340.27px;width:400px;text-align:center;font-size:11.5px;font-weight:normal;color:#808080;letter-spacing:-0.2px;line-height:11.5px;white-space:pre;">1650</div>
<div style="left:9px;top:386px;width:511px;height:1px;background:#a0a0a0"></div>
<div style="left:10px;top:387px;width:510px;height:1px;background:#ffffff"></div>
<div style="left:9px;top:386px;width:1px;height:78px;background:#a0a0a0"></div>
<div style="left:10px;top:387px;width:1px;height:76px;background:#ffffff"></div>
<div style="left:9px;top:463px;width:511px;height:1px;background:#a0a0a0"></div>
<div style="left:9px;top:464px;width:512px;height:1px;background:#ffffff"></div>
<div style="left:519px;top:386px;width:1px;height:78px;background:#a0a0a0"></div>
<div style="left:520px;top:386px;width:1px;height:79px;background:#ffffff"></div>
<div style="left:17px;top:384px;height:5px;background:#f0f0f0;padding:0 1px;font-size:13px;letter-spacing:0.3px;color:transparent;white-space:pre;line-height:5px">Emekliye Esas</div>
<div style="left:18px;top:380.00px;font-size:13px;font-weight:normal;color:#000;letter-spacing:0.3px;line-height:13px;white-space:pre;">Emekliye Esas</div>
<div style="left:-257px;top:409.15px;width:400px;text-align:right;font-size:14px;font-weight:bold;color:#000;letter-spacing:0.3px;line-height:14px;white-space:pre;">Derece/Kademe</div>
<div style="left:-257px;top:430.15px;width:400px;text-align:right;font-size:14px;font-weight:bold;color:#000;letter-spacing:0.3px;line-height:14px;white-space:pre;">Gösterge</div>
<div style="left:154px;top:403px;width:26px;height:19px;background:#fff;border-top:1px solid #a0a0a0;border-left:1px solid #a0a0a0;border-bottom:1px solid #ffffff;border-right:1px solid #ffffff;box-sizing:border-box"><div style="left:0;top:0;right:0;bottom:0;border-top:1px solid #696969;border-left:1px solid #696969;border-bottom:1px solid #e3e3e3;border-right:1px solid #e3e3e3"></div></div>
<div style="left:-33.0px;top:407.27px;width:400px;text-align:center;font-size:11.5px;font-weight:normal;color:#000;letter-spacing:0px;line-height:11.5px;white-space:pre;">4</div>
<div style="left:182px;top:403px;width:26px;height:19px;background:#fff;border-top:1px solid #a0a0a0;border-left:1px solid #a0a0a0;border-bottom:1px solid #ffffff;border-right:1px solid #ffffff;box-sizing:border-box"><div style="left:0;top:0;right:0;bottom:0;border-top:1px solid #696969;border-left:1px solid #696969;border-bottom:1px solid #e3e3e3;border-right:1px solid #e3e3e3"></div></div>
<div style="left:-5.0px;top:407.27px;width:400px;text-align:center;font-size:11.5px;font-weight:normal;color:#000;letter-spacing:0px;line-height:11.5px;white-space:pre;">2</div>
<div style="left:154px;top:425px;width:54px;height:19px;background:#f8f8f8;border-top:1px solid #a0a0a0;border-left:1px solid #a0a0a0;border-bottom:1px solid #ffffff;border-right:1px solid #ffffff;box-sizing:border-box"><div style="left:0;top:0;right:0;bottom:0;border-top:1px solid #696969;border-left:1px solid #696969;border-bottom:1px solid #e3e3e3;border-right:1px solid #e3e3e3"></div></div>
<div style="left:-19.0px;top:429.27px;width:400px;text-align:center;font-size:11.5px;font-weight:normal;color:#808080;letter-spacing:-0.2px;line-height:11.5px;white-space:pre;">950</div>
<div style="left:279px;top:430px;width:13px;height:13px;background:#fff;border-top:1px solid #a0a0a0;border-left:1px solid #a0a0a0;border-bottom:1px solid #ffffff;border-right:1px solid #ffffff;box-sizing:border-box"><div style="left:0;top:0;right:0;bottom:0;border-top:1px solid #696969;border-left:1px solid #696969;border-bottom:1px solid #e3e3e3;border-right:1px solid #e3e3e3"></div></div>
<svg style="left:279px;top:430px" width="13" height="13" shape-rendering="crispEdges"><path d="M3 5h1v3h-1zM4 6h1v3h-1zM5 7h1v3h-1zM6 6h1v3h-1zM7 5h1v3h-1zM8 4h1v3h-1zM9 3h1v3h-1z" fill="#000"/></svg>
<div style="left:298px;top:430.15px;font-size:14px;font-weight:bold;color:#000;letter-spacing:0.3px;line-height:14px;white-space:pre;">Ek Gösterge</div>
<div style="left:389px;top:426px;width:22px;height:20px;background:#f0f0f0;border-top:1px solid #ffffff;border-left:1px solid #ffffff;border-bottom:1px solid #696969;border-right:1px solid #696969;box-sizing:border-box"><div style="left:0;top:0;right:0;bottom:0;border-bottom:1px solid #a0a0a0;border-right:1px solid #a0a0a0"></div></div>
<svg style="left:392px;top:432px" width="16" height="9"><circle cx="3.2" cy="3.7" r="2.2" stroke="#cc0a1a" stroke-width="2.1" fill="#f4c8b8"/><rect x="5.5" y="2.6" width="10" height="2.2" fill="#cc0a1a"/><rect x="9.6" y="4" width="2.2" height="4" fill="#cc0a1a"/><rect x="12.6" y="4" width="2.2" height="4" fill="#cc0a1a"/></svg>
<div style="left:414px;top:426px;width:55px;height:19px;background:#fff;border-top:1px solid #a0a0a0;border-left:1px solid #a0a0a0;border-bottom:1px solid #ffffff;border-right:1px solid #ffffff;box-sizing:border-box"><div style="left:0;top:0;right:0;bottom:0;border-top:1px solid #696969;border-left:1px solid #696969;border-bottom:1px solid #e3e3e3;border-right:1px solid #e3e3e3"></div></div>
<div style="left:9px;top:482px;width:511px;height:1px;background:#a0a0a0"></div>
<div style="left:10px;top:483px;width:510px;height:1px;background:#ffffff"></div>
<div style="left:9px;top:482px;width:1px;height:78px;background:#a0a0a0"></div>
<div style="left:10px;top:483px;width:1px;height:76px;background:#ffffff"></div>
<div style="left:9px;top:559px;width:511px;height:1px;background:#a0a0a0"></div>
<div style="left:9px;top:560px;width:512px;height:1px;background:#ffffff"></div>
<div style="left:519px;top:482px;width:1px;height:78px;background:#a0a0a0"></div>
<div style="left:520px;top:482px;width:1px;height:79px;background:#ffffff"></div>
<div style="left:17px;top:480px;height:5px;background:#f0f0f0;padding:0 1px;font-size:13px;letter-spacing:0.1px;color:transparent;white-space:pre;line-height:5px">Terfi İşlemi</div>
<div style="left:18px;top:476.00px;font-size:13px;font-weight:normal;color:#000;letter-spacing:0.1px;line-height:13px;white-space:pre;">Terfi İşlemi</div>
<svg style="left:37.5px;top:497.5px" width="12" height="12"><circle cx="6" cy="6" r="5" fill="#fff"/><path d="M9.8 2.6 A5 5 0 0 0 2.2 9.4" stroke="#7a7a7a" fill="none" stroke-width="1.4"/><path d="M9.8 2.6 A5 5 0 0 1 2.2 9.4" stroke="#e8e8e8" fill="none" stroke-width="1"/></svg>
<div style="left:57px;top:498.15px;font-size:14px;font-weight:bold;color:#000;letter-spacing:0.3px;line-height:14px;white-space:pre;">Giriş</div>
<svg style="left:37.5px;top:517.5px" width="12" height="12"><circle cx="6" cy="6" r="5" fill="#fff"/><path d="M9.8 2.6 A5 5 0 0 0 2.2 9.4" stroke="#7a7a7a" fill="none" stroke-width="1.4"/><path d="M9.8 2.6 A5 5 0 0 1 2.2 9.4" stroke="#e8e8e8" fill="none" stroke-width="1"/></svg>
<div style="left:57px;top:517.15px;font-size:14px;font-weight:bold;color:#000;letter-spacing:0.3px;line-height:14px;white-space:pre;">Der/Kad.Terfi</div>
<svg style="left:37.5px;top:537.5px" width="12" height="12"><circle cx="6" cy="6" r="5" fill="#fff"/><path d="M9.8 2.6 A5 5 0 0 0 2.2 9.4" stroke="#7a7a7a" fill="none" stroke-width="1.4"/><path d="M9.8 2.6 A5 5 0 0 1 2.2 9.4" stroke="#e8e8e8" fill="none" stroke-width="1"/><circle cx="6" cy="6" r="2" fill="#000"/></svg>
<div style="left:57px;top:537.15px;font-size:14px;font-weight:bold;color:#000;letter-spacing:0.3px;line-height:14px;white-space:pre;">Terfi İptal</div>
<div style="left:7px;top:506.15px;width:400px;text-align:right;font-size:14px;font-weight:bold;color:#000;letter-spacing:0.3px;line-height:14px;white-space:pre;">Maaş Terfi Tarihi</div>
<div style="left:7px;top:528.15px;width:400px;text-align:right;font-size:14px;font-weight:bold;color:#000;letter-spacing:0.3px;line-height:14px;white-space:pre;">Emekli Terfi Tarihi</div>
<div style="left:414px;top:503px;width:67px;height:19px;background:#f0f0f0;border-top:1px solid #a0a0a0;border-left:1px solid #a0a0a0;border-bottom:1px solid #ffffff;border-right:1px solid #ffffff;box-sizing:border-box"><div style="left:0;top:0;right:0;bottom:0;border-top:1px solid #696969;border-left:1px solid #696969;border-bottom:1px solid #e3e3e3;border-right:1px solid #e3e3e3"></div></div>
<div style="left:414px;top:525px;width:67px;height:19px;background:#f0f0f0;border-top:1px solid #a0a0a0;border-left:1px solid #a0a0a0;border-bottom:1px solid #ffffff;border-right:1px solid #ffffff;box-sizing:border-box"><div style="left:0;top:0;right:0;bottom:0;border-top:1px solid #696969;border-left:1px solid #696969;border-bottom:1px solid #e3e3e3;border-right:1px solid #e3e3e3"></div></div>
<div style="left:9px;top:578px;width:511px;height:1px;background:#a0a0a0"></div>
<div style="left:10px;top:579px;width:510px;height:1px;background:#ffffff"></div>
<div style="left:9px;top:578px;width:1px;height:102px;background:#a0a0a0"></div>
<div style="left:10px;top:579px;width:1px;height:100px;background:#ffffff"></div>
<div style="left:9px;top:679px;width:511px;height:1px;background:#a0a0a0"></div>
<div style="left:9px;top:680px;width:512px;height:1px;background:#ffffff"></div>
<div style="left:519px;top:578px;width:1px;height:102px;background:#a0a0a0"></div>
<div style="left:520px;top:578px;width:1px;height:103px;background:#ffffff"></div>
<div style="left:17px;top:576px;height:5px;background:#f0f0f0;padding:0 1px;font-size:13px;letter-spacing:0px;color:transparent;white-space:pre;line-height:5px">Kısıtlı Maaş Hesabı</div>
<div style="left:18px;top:572.00px;font-size:13px;font-weight:normal;color:#000;letter-spacing:0px;line-height:13px;white-space:pre;">Kısıtlı Maaş Hesabı</div>
<svg style="left:37.5px;top:595.5px" width="12" height="12"><circle cx="6" cy="6" r="5" fill="#fff"/><path d="M9.8 2.6 A5 5 0 0 0 2.2 9.4" stroke="#7a7a7a" fill="none" stroke-width="1.4"/><path d="M9.8 2.6 A5 5 0 0 1 2.2 9.4" stroke="#e8e8e8" fill="none" stroke-width="1"/></svg>
<div style="left:57px;top:596.15px;font-size:14px;font-weight:bold;color:#000;letter-spacing:0.3px;line-height:14px;white-space:pre;">2/3 Maaş</div>
<svg style="left:37.5px;top:615.5px" width="12" height="12"><circle cx="6" cy="6" r="5" fill="#fff"/><path d="M9.8 2.6 A5 5 0 0 0 2.2 9.4" stroke="#7a7a7a" fill="none" stroke-width="1.4"/><path d="M9.8 2.6 A5 5 0 0 1 2.2 9.4" stroke="#e8e8e8" fill="none" stroke-width="1"/></svg>
<div style="left:57px;top:616.15px;font-size:14px;font-weight:bold;color:#000;letter-spacing:0.3px;line-height:14px;white-space:pre;">2/3 Vekil Öğretmen</div>
<svg style="left:37.5px;top:634.5px" width="12" height="12"><circle cx="6" cy="6" r="5" fill="#fff"/><path d="M9.8 2.6 A5 5 0 0 0 2.2 9.4" stroke="#7a7a7a" fill="none" stroke-width="1.4"/><path d="M9.8 2.6 A5 5 0 0 1 2.2 9.4" stroke="#e8e8e8" fill="none" stroke-width="1"/><circle cx="6" cy="6" r="2" fill="#000"/></svg>
<div style="left:57px;top:635.15px;font-size:14px;font-weight:bold;color:#000;letter-spacing:0.3px;line-height:14px;white-space:pre;">2/3 İptal</div>
<div style="left:37px;top:654px;width:13px;height:13px;background:#fff;border-top:1px solid #a0a0a0;border-left:1px solid #a0a0a0;border-bottom:1px solid #ffffff;border-right:1px solid #ffffff;box-sizing:border-box"><div style="left:0;top:0;right:0;bottom:0;border-top:1px solid #696969;border-left:1px solid #696969;border-bottom:1px solid #e3e3e3;border-right:1px solid #e3e3e3"></div></div>
<div style="left:57px;top:654.15px;font-size:14px;font-weight:bold;color:#000;letter-spacing:0.3px;line-height:14px;white-space:pre;">Çıkış İçin Maaş Hesap</div>
<div style="left:6px;top:596.15px;width:400px;text-align:right;font-size:14px;font-weight:bold;color:#000;letter-spacing:0.3px;line-height:14px;white-space:pre;">Kısıtlı Günü</div>
<div style="left:-62px;top:618.15px;width:400px;text-align:right;font-size:14px;font-weight:bold;color:#000;letter-spacing:0.3px;line-height:14px;white-space:pre;">Rapor Günü -</div>
<div style="left:6px;top:618.15px;width:400px;text-align:right;font-size:14px;font-weight:bold;color:#a0a0a0;letter-spacing:0.3px;line-height:14px;white-space:pre;">Ek Tazm.</div>
<div style="left:6px;top:637.15px;width:400px;text-align:right;font-size:14px;font-weight:bold;color:#000;letter-spacing:0.3px;line-height:14px;white-space:pre;">Rapor Toplam</div>
<div style="left:414px;top:593px;width:43px;height:19px;background:#fff;border-top:1px solid #a0a0a0;border-left:1px solid #a0a0a0;border-bottom:1px solid #ffffff;border-right:1px solid #ffffff;box-sizing:border-box"><div style="left:0;top:0;right:0;bottom:0;border-top:1px solid #696969;border-left:1px solid #696969;border-bottom:1px solid #e3e3e3;border-right:1px solid #e3e3e3"></div></div>
<div style="left:414px;top:615px;width:21px;height:19px;background:#fff;border-top:1px solid #a0a0a0;border-left:1px solid #a0a0a0;border-bottom:1px solid #ffffff;border-right:1px solid #ffffff;box-sizing:border-box"><div style="left:0;top:0;right:0;bottom:0;border-top:1px solid #696969;border-left:1px solid #696969;border-bottom:1px solid #e3e3e3;border-right:1px solid #e3e3e3"></div></div>
<div style="left:436px;top:615px;width:21px;height:19px;background:#fff;border-top:1px solid #a0a0a0;border-left:1px solid #a0a0a0;border-bottom:1px solid #ffffff;border-right:1px solid #ffffff;box-sizing:border-box"><div style="left:0;top:0;right:0;bottom:0;border-top:1px solid #696969;border-left:1px solid #696969;border-bottom:1px solid #e3e3e3;border-right:1px solid #e3e3e3"></div></div>
<div style="left:414px;top:636px;width:43px;height:19px;background:#f0f0f0;border-top:1px solid #a0a0a0;border-left:1px solid #a0a0a0;border-bottom:1px solid #ffffff;border-right:1px solid #ffffff;box-sizing:border-box"><div style="left:0;top:0;right:0;bottom:0;border-top:1px solid #696969;border-left:1px solid #696969;border-bottom:1px solid #e3e3e3;border-right:1px solid #e3e3e3"></div></div>
<div style="left:545px;top:272px;width:455px;height:1px;background:#a0a0a0"></div>
<div style="left:546px;top:273px;width:454px;height:1px;background:#ffffff"></div>
<div style="left:545px;top:272px;width:1px;height:408px;background:#a0a0a0"></div>
<div style="left:546px;top:273px;width:1px;height:406px;background:#ffffff"></div>
<div style="left:545px;top:679px;width:455px;height:1px;background:#a0a0a0"></div>
<div style="left:545px;top:680px;width:456px;height:1px;background:#ffffff"></div>
<div style="left:999px;top:272px;width:1px;height:408px;background:#a0a0a0"></div>
<div style="left:1000px;top:272px;width:1px;height:409px;background:#ffffff"></div>
<div style="left:362px;top:294.15px;width:400px;text-align:right;font-size:14px;font-weight:bold;color:#000;letter-spacing:0.3px;line-height:14px;white-space:pre;">Aile Yardımı</div>
<svg style="left:791.5px;top:294.5px" width="12" height="12"><circle cx="6" cy="6" r="5" fill="#fff"/><path d="M9.8 2.6 A5 5 0 0 0 2.2 9.4" stroke="#7a7a7a" fill="none" stroke-width="1.4"/><path d="M9.8 2.6 A5 5 0 0 1 2.2 9.4" stroke="#e8e8e8" fill="none" stroke-width="1"/><circle cx="6" cy="6" r="2" fill="#000"/></svg>
<div style="left:811px;top:294.15px;font-size:14px;font-weight:bold;color:#000;letter-spacing:0.2px;line-height:14px;white-space:pre;">Evet</div>
<svg style="left:873.5px;top:294.5px" width="12" height="12"><circle cx="6" cy="6" r="5" fill="#fff"/><path d="M9.8 2.6 A5 5 0 0 0 2.2 9.4" stroke="#7a7a7a" fill="none" stroke-width="1.4"/><path d="M9.8 2.6 A5 5 0 0 1 2.2 9.4" stroke="#e8e8e8" fill="none" stroke-width="1"/></svg>
<div style="left:892px;top:294.15px;font-size:14px;font-weight:bold;color:#000;letter-spacing:0.2px;line-height:14px;white-space:pre;">Hayır</div>
<div style="left:335px;top:314.15px;width:400px;text-align:right;font-size:14px;font-weight:bold;color:#000;letter-spacing:0.3px;line-height:14px;white-space:pre;">Çocuk Sayısı</div>
<div style="left:767px;top:313px;width:21px;height:19px;background:#f0f0f0;border-top:1px solid #ffffff;border-left:1px solid #ffffff;border-bottom:1px solid #696969;border-right:1px solid #696969;box-sizing:border-box"><div style="left:0;top:0;right:0;bottom:0;border-bottom:1px solid #a0a0a0;border-right:1px solid #a0a0a0"></div></div>
<div style="left:577px;top:317.69px;width:400px;text-align:center;font-size:11px;font-weight:normal;color:#000;letter-spacing:0px;line-height:11px;white-space:pre;">...</div>
<div style="left:791px;top:313px;width:20px;height:18px;background:#fff;border-top:1px solid #a0a0a0;border-left:1px solid #a0a0a0;border-bottom:1px solid #ffffff;border-right:1px solid #ffffff;box-sizing:border-box"><div style="left:0;top:0;right:0;bottom:0;border-top:1px solid #696969;border-left:1px solid #696969;border-bottom:1px solid #e3e3e3;border-right:1px solid #e3e3e3"></div></div>
<div style="left:794px;top:316.84px;font-size:12px;font-weight:normal;color:#000;letter-spacing:0px;line-height:12px;white-space:pre;">1</div>
<div style="left:362px;top:334.15px;width:400px;text-align:right;font-size:14px;font-weight:bold;color:#000;letter-spacing:0.3px;line-height:14px;white-space:pre;">Taban Ücret Gösterge</div>
<div style="left:791px;top:333px;width:54px;height:19px;background:#fff;border-top:1px solid #a0a0a0;border-left:1px solid #a0a0a0;border-bottom:1px solid #ffffff;border-right:1px solid #ffffff;box-sizing:border-box"><div style="left:0;top:0;right:0;bottom:0;border-top:1px solid #696969;border-left:1px solid #696969;border-bottom:1px solid #e3e3e3;border-right:1px solid #e3e3e3"></div></div>
<div style="left:794px;top:336.84px;font-size:12px;font-weight:normal;color:#000;letter-spacing:-0.2px;line-height:12px;white-space:pre;">1.000</div>
<div style="left:591px;top:355px;width:13px;height:13px;background:#fff;border-top:1px solid #a0a0a0;border-left:1px solid #a0a0a0;border-bottom:1px solid #ffffff;border-right:1px solid #ffffff;box-sizing:border-box"><div style="left:0;top:0;right:0;bottom:0;border-top:1px solid #696969;border-left:1px solid #696969;border-bottom:1px solid #e3e3e3;border-right:1px solid #e3e3e3"></div></div>
<svg style="left:591px;top:355px" width="13" height="13" shape-rendering="crispEdges"><path d="M3 5h1v3h-1zM4 6h1v3h-1zM5 7h1v3h-1zM6 6h1v3h-1zM7 5h1v3h-1zM8 4h1v3h-1zM9 3h1v3h-1z" fill="#000"/></svg>
<div style="left:610px;top:354.15px;font-size:14px;font-weight:bold;color:#000;letter-spacing:0.3px;line-height:14px;white-space:pre;">Yan Ödeme Gösterge</div>
<div style="left:769px;top:353px;width:21px;height:19px;background:#f0f0f0;border-top:1px solid #ffffff;border-left:1px solid #ffffff;border-bottom:1px solid #696969;border-right:1px solid #696969;box-sizing:border-box"><div style="left:0;top:0;right:0;bottom:0;border-bottom:1px solid #a0a0a0;border-right:1px solid #a0a0a0"></div></div>
<svg style="left:772px;top:359px" width="16" height="9"><circle cx="3.2" cy="3.7" r="2.2" stroke="#cc0a1a" stroke-width="2.1" fill="#f4c8b8"/><rect x="5.5" y="2.6" width="10" height="2.2" fill="#cc0a1a"/><rect x="9.6" y="4" width="2.2" height="4" fill="#cc0a1a"/><rect x="12.6" y="4" width="2.2" height="4" fill="#cc0a1a"/></svg>
<div style="left:791px;top:353px;width:54px;height:18px;background:#fff;border-top:1px solid #a0a0a0;border-left:1px solid #a0a0a0;border-bottom:1px solid #ffffff;border-right:1px solid #ffffff;box-sizing:border-box"><div style="left:0;top:0;right:0;bottom:0;border-top:1px solid #696969;border-left:1px solid #696969;border-bottom:1px solid #e3e3e3;border-right:1px solid #e3e3e3"></div></div>
<div style="left:362px;top:373.15px;width:400px;text-align:right;font-size:14px;font-weight:bold;color:#000;letter-spacing:0.3px;line-height:14px;white-space:pre;">Yabancı Dil Göstergesi</div>
<div style="left:791px;top:373px;width:54px;height:18px;background:#fff;border-top:1px solid #a0a0a0;border-left:1px solid #a0a0a0;border-bottom:1px solid #ffffff;border-right:1px solid #ffffff;box-sizing:border-box"><div style="left:0;top:0;right:0;bottom:0;border-top:1px solid #696969;border-left:1px solid #696969;border-bottom:1px solid #e3e3e3;border-right:1px solid #e3e3e3"></div></div>
<div style="left:591px;top:397px;width:13px;height:13px;background:#fff;border-top:1px solid #a0a0a0;border-left:1px solid #a0a0a0;border-bottom:1px solid #ffffff;border-right:1px solid #ffffff;box-sizing:border-box"><div style="left:0;top:0;right:0;bottom:0;border-top:1px solid #696969;border-left:1px solid #696969;border-bottom:1px solid #e3e3e3;border-right:1px solid #e3e3e3"></div></div>
<div style="left:610px;top:395.15px;font-size:14px;font-weight:bold;color:#000;letter-spacing:0.3px;line-height:14px;white-space:pre;">Hizmet / Özel. Hiz.Taz.</div>
<div style="left:769px;top:395px;width:21px;height:19px;background:#f0f0f0;border-top:1px solid #ffffff;border-left:1px solid #ffffff;border-bottom:1px solid #696969;border-right:1px solid #696969;box-sizing:border-box"><div style="left:0;top:0;right:0;bottom:0;border-bottom:1px solid #a0a0a0;border-right:1px solid #a0a0a0"></div></div>
<svg style="left:772px;top:401px" width="16" height="9"><circle cx="3.2" cy="3.7" r="2.2" stroke="#8c8c8c" stroke-width="2.1" fill="#d8d8d8"/><rect x="5.5" y="2.6" width="10" height="2.2" fill="#8c8c8c"/><rect x="9.6" y="4" width="2.2" height="4" fill="#8c8c8c"/><rect x="12.6" y="4" width="2.2" height="4" fill="#8c8c8c"/></svg>
<div style="left:791px;top:394px;width:54px;height:19px;background:#fff;border-top:1px solid #a0a0a0;border-left:1px solid #a0a0a0;border-bottom:1px solid #ffffff;border-right:1px solid #ffffff;box-sizing:border-box"><div style="left:0;top:0;right:0;bottom:0;border-top:1px solid #696969;border-left:1px solid #696969;border-bottom:1px solid #e3e3e3;border-right:1px solid #e3e3e3"></div></div>
<div style="left:849px;top:397px;width:13px;height:13px;background:#fff;border-top:1px solid #a0a0a0;border-left:1px solid #a0a0a0;border-bottom:1px solid #ffffff;border-right:1px solid #ffffff;box-sizing:border-box"><div style="left:0;top:0;right:0;bottom:0;border-top:1px solid #696969;border-left:1px solid #696969;border-bottom:1px solid #e3e3e3;border-right:1px solid #e3e3e3"></div></div>
<svg style="left:849px;top:397px" width="13" height="13" shape-rendering="crispEdges"><path d="M3 5h1v3h-1zM4 6h1v3h-1zM5 7h1v3h-1zM6 6h1v3h-1zM7 5h1v3h-1zM8 4h1v3h-1zM9 3h1v3h-1z" fill="#000"/></svg>
<div style="left:882px;top:395px;width:21px;height:20px;background:#f0f0f0;border-top:1px solid #ffffff;border-left:1px solid #ffffff;border-bottom:1px solid #696969;border-right:1px solid #696969;box-sizing:border-box"><div style="left:0;top:0;right:0;bottom:0;border-bottom:1px solid #a0a0a0;border-right:1px solid #a0a0a0"></div></div>
<svg style="left:885px;top:401px" width="16" height="9"><circle cx="3.2" cy="3.7" r="2.2" stroke="#cc0a1a" stroke-width="2.1" fill="#f4c8b8"/><rect x="5.5" y="2.6" width="10" height="2.2" fill="#cc0a1a"/><rect x="9.6" y="4" width="2.2" height="4" fill="#cc0a1a"/><rect x="12.6" y="4" width="2.2" height="4" fill="#cc0a1a"/></svg>
<div style="left:903px;top:394px;width:55px;height:19px;background:#fff;border-top:1px solid #a0a0a0;border-left:1px solid #a0a0a0;border-bottom:1px solid #ffffff;border-right:1px solid #ffffff;box-sizing:border-box"><div style="left:0;top:0;right:0;bottom:0;border-top:1px solid #696969;border-left:1px solid #696969;border-bottom:1px solid #e3e3e3;border-right:1px solid #e3e3e3"></div></div>
<div style="left:380px;top:417.15px;width:400px;text-align:right;font-size:14px;font-weight:bold;color:#000;letter-spacing:0.3px;line-height:14px;white-space:pre;">Ek Gelir</div>
<div style="left:791px;top:415px;width:90px;height:19px;background:#fff;border-top:1px solid #a0a0a0;border-left:1px solid #a0a0a0;border-bottom:1px solid #ffffff;border-right:1px solid #ffffff;box-sizing:border-box"><div style="left:0;top:0;right:0;bottom:0;border-top:1px solid #696969;border-left:1px solid #696969;border-bottom:1px solid #e3e3e3;border-right:1px solid #e3e3e3"></div></div>
<div style="left:903px;top:415px;width:50px;height:19px;background:#fff;border-top:1px solid #a0a0a0;border-left:1px solid #a0a0a0;border-bottom:1px solid #ffffff;border-right:1px solid #ffffff;box-sizing:border-box"><div style="left:0;top:0;right:0;bottom:0;border-top:1px solid #696969;border-left:1px solid #696969;border-bottom:1px solid #e3e3e3;border-right:1px solid #e3e3e3"></div></div>
<div style="left:936px;top:417px;width:16px;height:16px;background:#f0f0f0;border-top:1px solid #ffffff;border-left:1px solid #ffffff;border-bottom:1px solid #696969;border-right:1px solid #696969;box-sizing:border-box"><div style="left:0;top:0;right:0;bottom:0;border-bottom:1px solid #a0a0a0;border-right:1px solid #a0a0a0"></div></div>
<svg style="left:940px;top:424px" width="8" height="5"><path d="M0 0 L8 0 L4 4 Z" fill="#000"/></svg>
<div style="left:894px;top:337px;width:89px;height:1px;background:#a0a0a0"></div>
<div style="left:895px;top:338px;width:88px;height:1px;background:#ffffff"></div>
<div style="left:894px;top:337px;width:1px;height:55px;background:#a0a0a0"></div>
<div style="left:895px;top:338px;width:1px;height:53px;background:#ffffff"></div>
<div style="left:894px;top:391px;width:89px;height:1px;background:#a0a0a0"></div>
<div style="left:894px;top:392px;width:90px;height:1px;background:#ffffff"></div>
<div style="left:982px;top:337px;width:1px;height:55px;background:#a0a0a0"></div>
<div style="left:983px;top:337px;width:1px;height:56px;background:#ffffff"></div>
<div style="left:902px;top:335px;height:5px;background:#f0f0f0;padding:0 1px;font-size:11.5px;letter-spacing:-0.45px;color:transparent;white-space:pre;line-height:5px">Eşi Emekli mi?</div>
<div style="left:903px;top:333.27px;font-size:11.5px;font-weight:normal;color:#989898;letter-spacing:-0.45px;line-height:11.5px;white-space:pre;">Eşi Emekli mi?</div>
<svg style="left:904.5px;top:349.5px" width="12" height="12"><circle cx="6" cy="6" r="5" fill="#fff"/><path d="M9.8 2.6 A5 5 0 0 0 2.2 9.4" stroke="#7a7a7a" fill="none" stroke-width="1.4"/><path d="M9.8 2.6 A5 5 0 0 1 2.2 9.4" stroke="#e8e8e8" fill="none" stroke-width="1"/></svg>
<div style="left:921px;top:351.27px;font-size:11.5px;font-weight:normal;color:#000;letter-spacing:-0.3px;line-height:11.5px;white-space:pre;">Evet</div>
<svg style="left:904.5px;top:370.5px" width="12" height="12"><circle cx="6" cy="6" r="5" fill="#fff"/><path d="M9.8 2.6 A5 5 0 0 0 2.2 9.4" stroke="#7a7a7a" fill="none" stroke-width="1.4"/><path d="M9.8 2.6 A5 5 0 0 1 2.2 9.4" stroke="#e8e8e8" fill="none" stroke-width="1"/><circle cx="6" cy="6" r="2" fill="#000"/></svg>
<div style="left:921px;top:373.27px;font-size:11.5px;font-weight:normal;color:#000;letter-spacing:-0.6px;line-height:11.5px;white-space:pre;">Hayır</div>
<div style="left:591px;top:438px;width:13px;height:13px;background:#fff;border-top:1px solid #a0a0a0;border-left:1px solid #a0a0a0;border-bottom:1px solid #ffffff;border-right:1px solid #ffffff;box-sizing:border-box"><div style="left:0;top:0;right:0;bottom:0;border-top:1px solid #696969;border-left:1px solid #696969;border-bottom:1px solid #e3e3e3;border-right:1px solid #e3e3e3"></div></div>
<div style="left:611px;top:436.15px;font-size:14px;font-weight:bold;color:#000;letter-spacing:0.3px;line-height:14px;white-space:pre;">Makam Tazm.</div>
<div style="left:769px;top:435px;width:21px;height:20px;background:#f0f0f0;border-top:1px solid #ffffff;border-left:1px solid #ffffff;border-bottom:1px solid #696969;border-right:1px solid #696969;box-sizing:border-box"><div style="left:0;top:0;right:0;bottom:0;border-bottom:1px solid #a0a0a0;border-right:1px solid #a0a0a0"></div></div>
<svg style="left:772px;top:441px" width="16" height="9"><circle cx="3.2" cy="3.7" r="2.2" stroke="#8c8c8c" stroke-width="2.1" fill="#d8d8d8"/><rect x="5.5" y="2.6" width="10" height="2.2" fill="#8c8c8c"/><rect x="9.6" y="4" width="2.2" height="4" fill="#8c8c8c"/><rect x="12.6" y="4" width="2.2" height="4" fill="#8c8c8c"/></svg>
<div style="left:791px;top:435px;width:90px;height:19px;background:#fff;border-top:1px solid #a0a0a0;border-left:1px solid #a0a0a0;border-bottom:1px solid #ffffff;border-right:1px solid #ffffff;box-sizing:border-box"><div style="left:0;top:0;right:0;bottom:0;border-top:1px solid #696969;border-left:1px solid #696969;border-bottom:1px solid #e3e3e3;border-right:1px solid #e3e3e3"></div></div>
<div style="left:909px;top:438px;width:13px;height:13px;background:#f0f0f0;border-top:1px solid #a0a0a0;border-left:1px solid #a0a0a0;border-bottom:1px solid #ffffff;border-right:1px solid #ffffff;box-sizing:border-box"><div style="left:0;top:0;right:0;bottom:0;border-top:1px solid #696969;border-left:1px solid #696969;border-bottom:1px solid #e3e3e3;border-right:1px solid #e3e3e3"></div></div>
<div style="left:928px;top:438.84px;font-size:12px;font-weight:normal;color:#a0a0a0;letter-spacing:-0.6px;line-height:12px;white-space:pre;">Rapor</div>
<div style="left:591px;top:458px;width:13px;height:13px;background:#fff;border-top:1px solid #a0a0a0;border-left:1px solid #a0a0a0;border-bottom:1px solid #ffffff;border-right:1px solid #ffffff;box-sizing:border-box"><div style="left:0;top:0;right:0;bottom:0;border-top:1px solid #696969;border-left:1px solid #696969;border-bottom:1px solid #e3e3e3;border-right:1px solid #e3e3e3"></div></div>
<div style="left:611px;top:456.15px;font-size:14px;font-weight:bold;color:#000;letter-spacing:0.3px;line-height:14px;white-space:pre;">Temsil Tazmn.</div>
<div style="left:769px;top:455px;width:21px;height:20px;background:#f0f0f0;border-top:1px solid #ffffff;border-left:1px solid #ffffff;border-bottom:1px solid #696969;border-right:1px solid #696969;box-sizing:border-box"><div style="left:0;top:0;right:0;bottom:0;border-bottom:1px solid #a0a0a0;border-right:1px solid #a0a0a0"></div></div>
<svg style="left:772px;top:461px" width="16" height="9"><circle cx="3.2" cy="3.7" r="2.2" stroke="#8c8c8c" stroke-width="2.1" fill="#d8d8d8"/><rect x="5.5" y="2.6" width="10" height="2.2" fill="#8c8c8c"/><rect x="9.6" y="4" width="2.2" height="4" fill="#8c8c8c"/><rect x="12.6" y="4" width="2.2" height="4" fill="#8c8c8c"/></svg>
<div style="left:791px;top:455px;width:90px;height:19px;background:#fff;border-top:1px solid #a0a0a0;border-left:1px solid #a0a0a0;border-bottom:1px solid #ffffff;border-right:1px solid #ffffff;box-sizing:border-box"><div style="left:0;top:0;right:0;bottom:0;border-top:1px solid #696969;border-left:1px solid #696969;border-bottom:1px solid #e3e3e3;border-right:1px solid #e3e3e3"></div></div>
<div style="left:909px;top:458px;width:13px;height:13px;background:#f0f0f0;border-top:1px solid #a0a0a0;border-left:1px solid #a0a0a0;border-bottom:1px solid #ffffff;border-right:1px solid #ffffff;box-sizing:border-box"><div style="left:0;top:0;right:0;bottom:0;border-top:1px solid #696969;border-left:1px solid #696969;border-bottom:1px solid #e3e3e3;border-right:1px solid #e3e3e3"></div></div>
<div style="left:928px;top:458.84px;font-size:12px;font-weight:normal;color:#a0a0a0;letter-spacing:-0.6px;line-height:12px;white-space:pre;">Rapor</div>
<div style="left:591px;top:478px;width:13px;height:13px;background:#fff;border-top:1px solid #a0a0a0;border-left:1px solid #a0a0a0;border-bottom:1px solid #ffffff;border-right:1px solid #ffffff;box-sizing:border-box"><div style="left:0;top:0;right:0;bottom:0;border-top:1px solid #696969;border-left:1px solid #696969;border-bottom:1px solid #e3e3e3;border-right:1px solid #e3e3e3"></div></div>
<svg style="left:591px;top:478px" width="13" height="13" shape-rendering="crispEdges"><path d="M3 5h1v3h-1zM4 6h1v3h-1zM5 7h1v3h-1zM6 6h1v3h-1zM7 5h1v3h-1zM8 4h1v3h-1zM9 3h1v3h-1z" fill="#000"/></svg>
<div style="left:611px;top:476.15px;font-size:14px;font-weight:bold;color:#000;letter-spacing:0.3px;line-height:14px;white-space:pre;">Özelleştirme Tazm.</div>
<div style="left:769px;top:475px;width:21px;height:20px;background:#f0f0f0;border-top:1px solid #ffffff;border-left:1px solid #ffffff;border-bottom:1px solid #696969;border-right:1px solid #696969;box-sizing:border-box"><div style="left:0;top:0;right:0;bottom:0;border-bottom:1px solid #a0a0a0;border-right:1px solid #a0a0a0"></div></div>
<svg style="left:772px;top:481px" width="16" height="9"><circle cx="3.2" cy="3.7" r="2.2" stroke="#cc0a1a" stroke-width="2.1" fill="#f4c8b8"/><rect x="5.5" y="2.6" width="10" height="2.2" fill="#cc0a1a"/><rect x="9.6" y="4" width="2.2" height="4" fill="#cc0a1a"/><rect x="12.6" y="4" width="2.2" height="4" fill="#cc0a1a"/></svg>
<div style="left:791px;top:475px;width:90px;height:19px;background:#fff;border-top:1px solid #a0a0a0;border-left:1px solid #a0a0a0;border-bottom:1px solid #ffffff;border-right:1px solid #ffffff;box-sizing:border-box"><div style="left:0;top:0;right:0;bottom:0;border-top:1px solid #696969;border-left:1px solid #696969;border-bottom:1px solid #e3e3e3;border-right:1px solid #e3e3e3"></div></div>
<div style="left:794px;top:477.84px;font-size:12px;font-weight:normal;color:#505050;letter-spacing:-0.4px;line-height:12px;white-space:pre;">500</div>
<div style="left:909px;top:478px;width:13px;height:13px;background:#f0f0f0;border-top:1px solid #a0a0a0;border-left:1px solid #a0a0a0;border-bottom:1px solid #ffffff;border-right:1px solid #ffffff;box-sizing:border-box"><div style="left:0;top:0;right:0;bottom:0;border-top:1px solid #696969;border-left:1px solid #696969;border-bottom:1px solid #e3e3e3;border-right:1px solid #e3e3e3"></div></div>
<div style="left:928px;top:478.84px;font-size:12px;font-weight:normal;color:#a0a0a0;letter-spacing:-0.6px;line-height:12px;white-space:pre;">Rapor</div>
<div style="left:591px;top:498px;width:13px;height:13px;background:#fff;border-top:1px solid #a0a0a0;border-left:1px solid #a0a0a0;border-bottom:1px solid #ffffff;border-right:1px solid #ffffff;box-sizing:border-box"><div style="left:0;top:0;right:0;bottom:0;border-top:1px solid #696969;border-left:1px solid #696969;border-bottom:1px solid #e3e3e3;border-right:1px solid #e3e3e3"></div></div>
<svg style="left:591px;top:498px" width="13" height="13" shape-rendering="crispEdges"><path d="M3 5h1v3h-1zM4 6h1v3h-1zM5 7h1v3h-1zM6 6h1v3h-1zM7 5h1v3h-1zM8 4h1v3h-1zM9 3h1v3h-1z" fill="#000"/></svg>
<div style="left:611px;top:496.15px;font-size:14px;font-weight:bold;color:#000;letter-spacing:0.3px;line-height:14px;white-space:pre;">Görev Tazmn.</div>
<div style="left:769px;top:495px;width:21px;height:20px;background:#f0f0f0;border-top:1px solid #ffffff;border-left:1px solid #ffffff;border-bottom:1px solid #696969;border-right:1px solid #696969;box-sizing:border-box"><div style="left:0;top:0;right:0;bottom:0;border-bottom:1px solid #a0a0a0;border-right:1px solid #a0a0a0"></div></div>
<svg style="left:772px;top:501px" width="16" height="9"><circle cx="3.2" cy="3.7" r="2.2" stroke="#cc0a1a" stroke-width="2.1" fill="#f4c8b8"/><rect x="5.5" y="2.6" width="10" height="2.2" fill="#cc0a1a"/><rect x="9.6" y="4" width="2.2" height="4" fill="#cc0a1a"/><rect x="12.6" y="4" width="2.2" height="4" fill="#cc0a1a"/></svg>
<div style="left:791px;top:495px;width:90px;height:19px;background:#fff;border-top:1px solid #a0a0a0;border-left:1px solid #a0a0a0;border-bottom:1px solid #ffffff;border-right:1px solid #ffffff;box-sizing:border-box"><div style="left:0;top:0;right:0;bottom:0;border-top:1px solid #696969;border-left:1px solid #696969;border-bottom:1px solid #e3e3e3;border-right:1px solid #e3e3e3"></div></div>
<div style="left:794px;top:497.84px;font-size:12px;font-weight:normal;color:#505050;letter-spacing:-0.4px;line-height:12px;white-space:pre;">200</div>
<div style="left:909px;top:498px;width:13px;height:13px;background:#f0f0f0;border-top:1px solid #a0a0a0;border-left:1px solid #a0a0a0;border-bottom:1px solid #ffffff;border-right:1px solid #ffffff;box-sizing:border-box"><div style="left:0;top:0;right:0;bottom:0;border-top:1px solid #696969;border-left:1px solid #696969;border-bottom:1px solid #e3e3e3;border-right:1px solid #e3e3e3"></div></div>
<div style="left:928px;top:498.84px;font-size:12px;font-weight:normal;color:#a0a0a0;letter-spacing:-0.6px;line-height:12px;white-space:pre;">Rapor</div>
<div style="left:591px;top:518px;width:13px;height:13px;background:#fff;border-top:1px solid #a0a0a0;border-left:1px solid #a0a0a0;border-bottom:1px solid #ffffff;border-right:1px solid #ffffff;box-sizing:border-box"><div style="left:0;top:0;right:0;bottom:0;border-top:1px solid #696969;border-left:1px solid #696969;border-bottom:1px solid #e3e3e3;border-right:1px solid #e3e3e3"></div></div>
<div style="left:611px;top:516.15px;font-size:14px;font-weight:bold;color:#000;letter-spacing:0.3px;line-height:14px;white-space:pre;">Ücret Göstergesi</div>
<div style="left:769px;top:515px;width:21px;height:20px;background:#f0f0f0;border-top:1px solid #ffffff;border-left:1px solid #ffffff;border-bottom:1px solid #696969;border-right:1px solid #696969;box-sizing:border-box"><div style="left:0;top:0;right:0;bottom:0;border-bottom:1px solid #a0a0a0;border-right:1px solid #a0a0a0"></div></div>
<svg style="left:772px;top:521px" width="16" height="9"><circle cx="3.2" cy="3.7" r="2.2" stroke="#8c8c8c" stroke-width="2.1" fill="#d8d8d8"/><rect x="5.5" y="2.6" width="10" height="2.2" fill="#8c8c8c"/><rect x="9.6" y="4" width="2.2" height="4" fill="#8c8c8c"/><rect x="12.6" y="4" width="2.2" height="4" fill="#8c8c8c"/></svg>
<div style="left:791px;top:515px;width:90px;height:19px;background:#fff;border-top:1px solid #a0a0a0;border-left:1px solid #a0a0a0;border-bottom:1px solid #ffffff;border-right:1px solid #ffffff;box-sizing:border-box"><div style="left:0;top:0;right:0;bottom:0;border-top:1px solid #696969;border-left:1px solid #696969;border-bottom:1px solid #e3e3e3;border-right:1px solid #e3e3e3"></div></div>
<div style="left:909px;top:518px;width:13px;height:13px;background:#f0f0f0;border-top:1px solid #a0a0a0;border-left:1px solid #a0a0a0;border-bottom:1px solid #ffffff;border-right:1px solid #ffffff;box-sizing:border-box"><div style="left:0;top:0;right:0;bottom:0;border-top:1px solid #696969;border-left:1px solid #696969;border-bottom:1px solid #e3e3e3;border-right:1px solid #e3e3e3"></div></div>
<div style="left:928px;top:518.84px;font-size:12px;font-weight:normal;color:#a0a0a0;letter-spacing:-0.6px;line-height:12px;white-space:pre;">Rapor</div>
<div style="left:591px;top:538px;width:13px;height:13px;background:#fff;border-top:1px solid #a0a0a0;border-left:1px solid #a0a0a0;border-bottom:1px solid #ffffff;border-right:1px solid #ffffff;box-sizing:border-box"><div style="left:0;top:0;right:0;bottom:0;border-top:1px solid #696969;border-left:1px solid #696969;border-bottom:1px solid #e3e3e3;border-right:1px solid #e3e3e3"></div></div>
<svg style="left:591px;top:538px" width="13" height="13" shape-rendering="crispEdges"><path d="M3 5h1v3h-1zM4 6h1v3h-1zM5 7h1v3h-1zM6 6h1v3h-1zM7 5h1v3h-1zM8 4h1v3h-1zM9 3h1v3h-1z" fill="#000"/></svg>
<div style="left:611px;top:536.15px;font-size:14px;font-weight:bold;color:#000;letter-spacing:0.3px;line-height:14px;white-space:pre;">Denge Tazm.</div>
<div style="left:769px;top:535px;width:21px;height:20px;background:#f0f0f0;border-top:1px solid #ffffff;border-left:1px solid #ffffff;border-bottom:1px solid #696969;border-right:1px solid #696969;box-sizing:border-box"><div style="left:0;top:0;right:0;bottom:0;border-bottom:1px solid #a0a0a0;border-right:1px solid #a0a0a0"></div></div>
<svg style="left:772px;top:541px" width="16" height="9"><circle cx="3.2" cy="3.7" r="2.2" stroke="#cc0a1a" stroke-width="2.1" fill="#f4c8b8"/><rect x="5.5" y="2.6" width="10" height="2.2" fill="#cc0a1a"/><rect x="9.6" y="4" width="2.2" height="4" fill="#cc0a1a"/><rect x="12.6" y="4" width="2.2" height="4" fill="#cc0a1a"/></svg>
<div style="left:791px;top:535px;width:90px;height:19px;background:#fff;border-top:1px solid #a0a0a0;border-left:1px solid #a0a0a0;border-bottom:1px solid #ffffff;border-right:1px solid #ffffff;box-sizing:border-box"><div style="left:0;top:0;right:0;bottom:0;border-top:1px solid #696969;border-left:1px solid #696969;border-bottom:1px solid #e3e3e3;border-right:1px solid #e3e3e3"></div></div>
<div style="left:794px;top:537.84px;font-size:12px;font-weight:normal;color:#505050;letter-spacing:-0.4px;line-height:12px;white-space:pre;">100</div>
<div style="left:909px;top:538px;width:13px;height:13px;background:#f0f0f0;border-top:1px solid #a0a0a0;border-left:1px solid #a0a0a0;border-bottom:1px solid #ffffff;border-right:1px solid #ffffff;box-sizing:border-box"><div style="left:0;top:0;right:0;bottom:0;border-top:1px solid #696969;border-left:1px solid #696969;border-bottom:1px solid #e3e3e3;border-right:1px solid #e3e3e3"></div></div>
<div style="left:928px;top:538.84px;font-size:12px;font-weight:normal;color:#a0a0a0;letter-spacing:-0.6px;line-height:12px;white-space:pre;">Rapor</div>
<div style="left:591px;top:558px;width:13px;height:13px;background:#fff;border-top:1px solid #a0a0a0;border-left:1px solid #a0a0a0;border-bottom:1px solid #ffffff;border-right:1px solid #ffffff;box-sizing:border-box"><div style="left:0;top:0;right:0;bottom:0;border-top:1px solid #696969;border-left:1px solid #696969;border-bottom:1px solid #e3e3e3;border-right:1px solid #e3e3e3"></div></div>
<div style="left:611px;top:556.15px;font-size:14px;font-weight:bold;color:#000;letter-spacing:0.3px;line-height:14px;white-space:pre;">Sendika Ödeneği</div>
<div style="left:769px;top:555px;width:21px;height:20px;background:#f0f0f0;border-top:1px solid #ffffff;border-left:1px solid #ffffff;border-bottom:1px solid #696969;border-right:1px solid #696969;box-sizing:border-box"><div style="left:0;top:0;right:0;bottom:0;border-bottom:1px solid #a0a0a0;border-right:1px solid #a0a0a0"></div></div>
<svg style="left:772px;top:561px" width="16" height="9"><circle cx="3.2" cy="3.7" r="2.2" stroke="#8c8c8c" stroke-width="2.1" fill="#d8d8d8"/><rect x="5.5" y="2.6" width="10" height="2.2" fill="#8c8c8c"/><rect x="9.6" y="4" width="2.2" height="4" fill="#8c8c8c"/><rect x="12.6" y="4" width="2.2" height="4" fill="#8c8c8c"/></svg>
<div style="left:791px;top:555px;width:90px;height:19px;background:#fff;border-top:1px solid #a0a0a0;border-left:1px solid #a0a0a0;border-bottom:1px solid #ffffff;border-right:1px solid #ffffff;box-sizing:border-box"><div style="left:0;top:0;right:0;bottom:0;border-top:1px solid #696969;border-left:1px solid #696969;border-bottom:1px solid #e3e3e3;border-right:1px solid #e3e3e3"></div></div>
<div style="left:909px;top:558px;width:13px;height:13px;background:#f0f0f0;border-top:1px solid #a0a0a0;border-left:1px solid #a0a0a0;border-bottom:1px solid #ffffff;border-right:1px solid #ffffff;box-sizing:border-box"><div style="left:0;top:0;right:0;bottom:0;border-top:1px solid #696969;border-left:1px solid #696969;border-bottom:1px solid #e3e3e3;border-right:1px solid #e3e3e3"></div></div>
<div style="left:928px;top:558.84px;font-size:12px;font-weight:normal;color:#a0a0a0;letter-spacing:-0.6px;line-height:12px;white-space:pre;">Rapor</div>
<div style="left:591px;top:578px;width:13px;height:13px;background:#fff;border-top:1px solid #a0a0a0;border-left:1px solid #a0a0a0;border-bottom:1px solid #ffffff;border-right:1px solid #ffffff;box-sizing:border-box"><div style="left:0;top:0;right:0;bottom:0;border-top:1px solid #696969;border-left:1px solid #696969;border-bottom:1px solid #e3e3e3;border-right:1px solid #e3e3e3"></div></div>
<div style="left:769px;top:575px;width:21px;height:20px;background:#f0f0f0;border-top:1px solid #ffffff;border-left:1px solid #ffffff;border-bottom:1px solid #696969;border-right:1px solid #696969;box-sizing:border-box"><div style="left:0;top:0;right:0;bottom:0;border-bottom:1px solid #a0a0a0;border-right:1px solid #a0a0a0"></div></div>
<svg style="left:772px;top:581px" width="16" height="9"><circle cx="3.2" cy="3.7" r="2.2" stroke="#8c8c8c" stroke-width="2.1" fill="#d8d8d8"/><rect x="5.5" y="2.6" width="10" height="2.2" fill="#8c8c8c"/><rect x="9.6" y="4" width="2.2" height="4" fill="#8c8c8c"/><rect x="12.6" y="4" width="2.2" height="4" fill="#8c8c8c"/></svg>
<div style="left:791px;top:575px;width:90px;height:19px;background:#fff;border-top:1px solid #a0a0a0;border-left:1px solid #a0a0a0;border-bottom:1px solid #ffffff;border-right:1px solid #ffffff;box-sizing:border-box"><div style="left:0;top:0;right:0;bottom:0;border-top:1px solid #696969;border-left:1px solid #696969;border-bottom:1px solid #e3e3e3;border-right:1px solid #e3e3e3"></div></div>
<div style="left:909px;top:578px;width:13px;height:13px;background:#f0f0f0;border-top:1px solid #a0a0a0;border-left:1px solid #a0a0a0;border-bottom:1px solid #ffffff;border-right:1px solid #ffffff;box-sizing:border-box"><div style="left:0;top:0;right:0;bottom:0;border-top:1px solid #696969;border-left:1px solid #696969;border-bottom:1px solid #e3e3e3;border-right:1px solid #e3e3e3"></div></div>
<div style="left:928px;top:578.84px;font-size:12px;font-weight:normal;color:#a0a0a0;letter-spacing:-0.6px;line-height:12px;white-space:pre;">Rapor</div>
<div style="left:609px;top:535px;width:95px;height:18px;border:1px dotted #000"></div>
<div style="left:2px;top:700px;width:1028px;height:1px;background:#e4e4e4"></div>
<div style="left:2px;top:701px;width:1028px;height:1px;background:#ffffff"></div>
<div style="left:4px;top:704.84px;font-size:12px;font-weight:normal;color:#000;letter-spacing:-0.69px;line-height:12px;white-space:pre;">Puan Tablosunda Önceden Girilen Tutarlar İşlenir. Çeşitli Gelirler İçin Formüle Edilebilir Alanlardır. (Bak:Değişken Gelirler).</div>
</body></html>
